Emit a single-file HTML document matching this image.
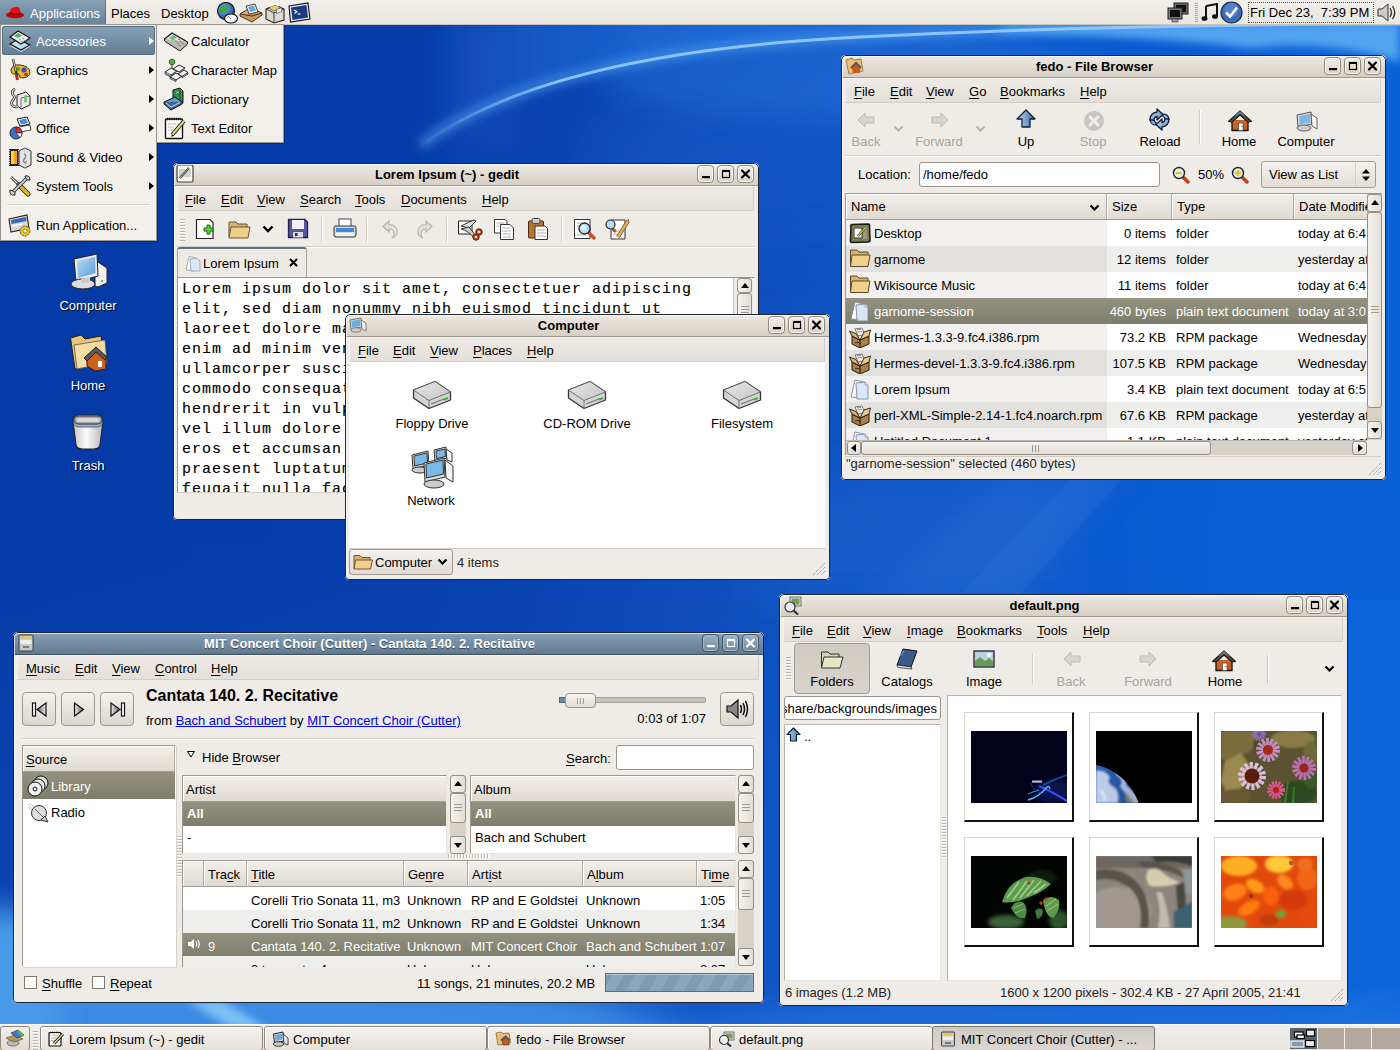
<!DOCTYPE html>
<html><head><meta charset="utf-8">
<style>
*{box-sizing:border-box}
html,body{margin:0;padding:0}
body{width:1400px;height:1050px;overflow:hidden;position:relative;font-family:"Liberation Sans",sans-serif;font-size:13px;color:#000;
background:#0b3ea8}
.a{position:absolute}
#bg{position:absolute;left:0;top:0;width:1400px;height:1050px;
background:
 radial-gradient(ellipse 700px 260px at 1250px 80px, rgba(120,190,255,.35), rgba(120,190,255,0) 70%),
 linear-gradient(160deg, rgba(0,0,0,0) 0%, rgba(0,0,0,0) 100%),
 linear-gradient(100deg,#0a38a2 0%,#0c40ac 30%,#1150bf 55%,#0f5cd0 80%,#0e62d8 100%)}
.win{position:absolute;background:#efebe7;border-radius:5px 5px 4px 4px;overflow:hidden}
.win::after{content:"";position:absolute;left:0;top:0;right:0;bottom:0;border:1px solid #1e2430;border-radius:5px 5px 4px 4px;pointer-events:none;box-shadow:inset 1px 1px 0 rgba(255,255,255,.7)}
.tb{position:absolute;left:0;right:0;top:0;height:23px;background:linear-gradient(#eeebe5,#d6cfc4);border-bottom:1px solid #9d968a;border-radius:4px 4px 0 0;box-shadow:inset 0 1px 0 #fff}
.tb.act{background:linear-gradient(#8ba3b8,#60798f);border-bottom:1px solid #3d4e5c}
.tt{position:absolute;left:0;right:0;top:1px;text-align:center;font-weight:bold;line-height:22px;white-space:nowrap}
.act .tt{color:#fff;text-shadow:0 1px 0 #3a4a58}
.btns{position:absolute;right:4px;top:2px;height:18px}
.btn{position:absolute;top:0;width:17px;height:18px;border:1px solid #8d877c;border-radius:4px;background:linear-gradient(#f2efea,#d8d2c8);box-shadow:inset 0 0 0 1px #fbf9f6}
.act .btn{border-color:#3f5263;background:linear-gradient(#9db2c4,#6f889d);box-shadow:inset 0 0 0 1px #a8bccc}
.mb{position:absolute;height:25px;background:linear-gradient(#eeeae5,#e4dfd8);border:1px solid #d4cfc6;border-top-color:#f6f4f1;border-left-color:#f6f4f1}
.mi{position:absolute;top:5px;white-space:nowrap;line-height:15px}
u{text-decoration:underline;text-decoration-thickness:1px;text-underline-offset:2px}
.grip{position:absolute;width:5px;height:22px;background:repeating-linear-gradient(#b8b2a8 0 1px,#fff 1px 2px,transparent 2px 3px)}
.sbb{position:absolute;width:16px;border:1px solid #948e84;border-radius:3px;background:linear-gradient(90deg,#f6f4f0,#e2ddd5)}
.aru{position:absolute;left:3px;top:6px;width:0;height:0;border-left:4px solid transparent;border-right:4px solid transparent;border-bottom:5px solid #000}
.ard{position:absolute;left:3px;top:6px;width:0;height:0;border-left:4px solid transparent;border-right:4px solid transparent;border-top:5px solid #000}
.grip3{position:absolute;left:3px;top:50%;margin-top:-4px;width:8px;height:7px;background:repeating-linear-gradient(#a09a90 0 1px,transparent 1px 3px)}
.hdr{background:linear-gradient(#f2efea,#e0dad1);border-right:1px solid #b0aa9f;border-bottom:1px solid #a39d92;box-shadow:inset 1px 1px 0 #fff}
.sbb2{position:absolute;height:14px;border:1px solid #948e84;border-radius:3px;background:linear-gradient(#f6f4f0,#e2ddd5)}
.arl{position:absolute;left:3px;top:2px;width:0;height:0;border-top:4px solid transparent;border-bottom:4px solid transparent;border-right:5px solid #000}
.arr2{position:absolute;left:5px;top:2px;width:0;height:0;border-top:4px solid transparent;border-bottom:4px solid transparent;border-left:5px solid #000}
.grip3v{position:absolute;left:50%;top:3px;margin-left:-4px;width:7px;height:7px;background:repeating-linear-gradient(90deg,#a09a90 0 1px,transparent 1px 3px)}
.lk{color:#0000ee;text-decoration:underline}
.dl{color:#fff;text-shadow:1px 1px 1px #000}
.nw{white-space:nowrap}
.tx{position:absolute;white-space:nowrap;line-height:15px}
.menu{position:absolute;background:#f3f0ec;border:1px solid #9b968d;box-shadow:1px 1px 0 rgba(0,0,0,.25)}
.arr{position:absolute;width:0;height:0;border-left:5px solid #000;border-top:4px solid transparent;border-bottom:4px solid transparent}
</style></head><body>
<svg id="bgsvg" class="a" style="left:0;top:0" width="1400" height="1050" viewBox="0 0 1400 1050">
<defs>
 <linearGradient id="bgl" x1="0" y1="0" x2="1" y2="0"><stop offset="0" stop-color="#053aa6"/><stop offset=".3" stop-color="#073daa"/><stop offset=".48" stop-color="#0c4ab8"/><stop offset=".62" stop-color="#0e54c4"/><stop offset=".8" stop-color="#0a5ad0"/><stop offset="1" stop-color="#0a62d8"/></linearGradient>
 <filter id="b07" x="-50%" y="-50%" width="200%" height="200%"><feGaussianBlur stdDeviation=".7"/></filter>
 <filter id="b4" x="-50%" y="-50%" width="200%" height="200%"><feGaussianBlur stdDeviation="4"/></filter>
 <filter id="b12" x="-50%" y="-50%" width="200%" height="200%"><feGaussianBlur stdDeviation="14"/></filter>
 <filter id="b30" x="-50%" y="-50%" width="200%" height="200%"><feGaussianBlur stdDeviation="30"/></filter>
</defs>
<rect width="1400" height="1050" fill="url(#bgl)"/>
<defs><linearGradient id="vgl" x1="0" y1="0" x2="0" y2="1"><stop offset="0" stop-color="#1a60d0" stop-opacity="0"/><stop offset="1" stop-color="#1a60d0" stop-opacity=".35"/></linearGradient></defs><rect x="0" y="480" width="1400" height="570" fill="url(#vgl)"/>
<!-- lower left lighter -->
<ellipse cx="180" cy="1040" rx="480" ry="110" fill="#3a8ae4" filter="url(#b30)"/><ellipse cx="0" cy="1000" rx="60" ry="90" fill="#4a9ae8" filter="url(#b12)"/>
<!-- top center glow above streak -->
<defs><linearGradient id="agl" x1="0" y1="0" x2="1" y2="0"><stop offset="0" stop-color="#2270dc" stop-opacity="0"/><stop offset=".12" stop-color="#2270dc" stop-opacity=".45"/><stop offset=".3" stop-color="#2270dc" stop-opacity=".75"/><stop offset="1" stop-color="#2a78e0" stop-opacity=".8"/></linearGradient></defs><path d="M421 145 C480 100 600 50 860 37 C1000 30 1200 24 1400 24 V0 H421Z" fill="url(#agl)" filter="url(#b4)"/>
<path d="M1000 25 H1400 V62 Q1330 40 1250 48 Q1150 36 1000 33Z" fill="#6cbcf8" opacity=".75" filter="url(#b4)"/>
<path d="M560 160 Q700 60 860 50 Q1000 45 1060 60 L1060 250 Q900 200 700 240Z" fill="#1258c8" opacity=".5" filter="url(#b30)"/>
<rect x="455" y="25" width="70" height="130" fill="#1a5ac8" opacity=".3" filter="url(#b12)"/>
<!-- thin streak -->
<ellipse cx="860" cy="75" rx="260" ry="45" fill="#2a78e0" opacity=".4" filter="url(#b12)"/>
<path d="M421 145 C480 100 600 50 860 37 C1000 30 1200 24 1400 24" stroke="#5aaaf8" stroke-width="13" fill="none" opacity=".42" filter="url(#b4)"/>
<defs><linearGradient id="stg" gradientUnits="userSpaceOnUse" x1="415" y1="0" x2="560" y2="0"><stop offset="0" stop-color="#9ad0ff" stop-opacity="0"/><stop offset="1" stop-color="#9ad0ff" stop-opacity="1"/></linearGradient></defs><path d="M415 150 C480 100 600 50 860 37 C1000 30 1200 24 1400 24" stroke="url(#stg)" stroke-width="3" fill="none" opacity=".85" filter="url(#b07)"/>
<!-- diagonal band below file browser -->
<rect x="760" y="470" width="300" height="130" fill="#1a5ecc" opacity=".6" filter="url(#b30)"/><path d="M1010 605 L1130 470 L1000 470 L860 605Z" fill="#2a70d8" opacity=".35" filter="url(#b12)"/><path d="M1010 605 L1130 470 L1080 470 L950 605Z" fill="#2a70d8" opacity=".3" filter="url(#b07)"/>
<!-- bottom strip streaks -->
<path d="M185 1000 L235 1030 L270 1030 L222 1000Z" fill="#9ad8ff" opacity=".7" filter="url(#b4)"/>
<path d="M380 1000 Q480 1010 560 1030 L700 1030 Q600 1010 500 1000Z" fill="#3a88e0" opacity=".5" filter="url(#b4)"/>
<path d="M1300 1030 Q1340 1010 1400 990 V1030Z" fill="#2a78e0" opacity=".5" filter="url(#b12)"/>
<path d="M1347 1010 Q1370 1000 1400 990" stroke="#4a98f0" stroke-width="3" fill="none" opacity=".6" filter="url(#b4)"/>
<rect x="1347" y="600" width="60" height="420" fill="#0c68dc" opacity=".6"/>
<ellipse cx="1050" cy="1030" rx="420" ry="35" fill="#2a7ee6" opacity=".45" filter="url(#b12)"/>
</svg>


<!-- DESKTOP ICONS -->
<svg class="a" style="left:68px;top:253px" width="41" height="37" viewBox="0 0 41 37"><defs><linearGradient id="scr" x1="0" y1="0" x2="1" y2="1"><stop offset="0" stop-color="#b8dcf8"/><stop offset="1" stop-color="#5a9ad8"/></linearGradient></defs><path d="M27 7 L39 15 V30 L30 34 L27 33Z" fill="#f0f0f0" stroke="#222" stroke-width="1"/><path d="M6 6 L29 1 L30 23 L8 29Z" fill="#e8e8e8" stroke="#222" stroke-width="1"/><path d="M9 8 L27 4 L27.5 20 L10 25Z" fill="url(#scr)"/><ellipse cx="15" cy="31" rx="12" ry="5" fill="#ddd" stroke="#222" stroke-width="1"/><path d="M13 26 L22 24 L22 29 L13 30Z" fill="#ccc"/><circle cx="34" cy="28" r="1" fill="#3a3"/></svg>
<div class="tx dl" style="left:38px;top:298px;width:100px;text-align:center">Computer</div>
<svg class="a" style="left:69px;top:333px" width="40" height="39" viewBox="0 0 40 39"><path d="M1.5 5 L12 2 L16 6 L32 3 L36 30 L6 36Z" fill="#e8c47a" stroke="#222" stroke-width="1"/><path d="M5 12 L36 7 L38 30 L8 36Z" fill="#f6dca0" stroke="#555" stroke-width=".8"/><path d="M18 26 L28 18 L37 26 V36 L26 38 L18 33Z" fill="#d06020" stroke="#222" stroke-width="1"/><path d="M15 25 L27 14 L38 24 L36 27 L27 19 L18 28Z" fill="#5a5a5a" stroke="#222" stroke-width="1"/><rect x="29" y="28" width="4" height="6" fill="#fff"/></svg>
<div class="tx dl" style="left:38px;top:378px;width:100px;text-align:center">Home</div>
<svg class="a" style="left:71px;top:412px" width="34" height="39" viewBox="0 0 34 39"><defs><linearGradient id="trg" x1="0" x2="1"><stop offset="0" stop-color="#c8c8c8"/><stop offset=".45" stop-color="#fafafa"/><stop offset="1" stop-color="#b8b8b8"/></linearGradient></defs><path d="M2 9 Q2 3 8 3 H26 Q32 3 32 9 L29 33 Q28 37 23 37 H11 Q6 37 5 33Z" fill="url(#trg)" stroke="#222" stroke-width="1.1"/><path d="M2.5 10 Q3 15 8 15 H26 Q31 15 31.5 10" fill="#9ab0c8" stroke="#5a6a80" stroke-width="1"/><path d="M3 8 Q3 4 8 4 H26 Q31 4 31 8 Q31 12 26 12 H8 Q3 12 3 8Z" fill="#a8a8a8" stroke="#333" stroke-width="1"/><path d="M5.5 8 Q5.5 6 8.5 6 H25.5 Q28.5 6 28.5 8 Q28.5 10 25.5 10 H8.5 Q5.5 10 5.5 8Z" fill="#d8d8d8"/></svg>
<div class="tx dl" style="left:38px;top:458px;width:100px;text-align:center">Trash</div>

<!-- TOP PANEL -->
<div class="a" id="toppanel" style="left:0;top:0;width:1400px;height:25px;background:linear-gradient(#f2efeb,#e9e5df);border-bottom:1px solid #c9c3b9">
 <div class="a" style="left:0;top:0;width:106px;height:24px;background:linear-gradient(#86a0b6,#6a8499);border-right:1px solid #5b7185"></div>
 <svg class="a" style="left:5px;top:5px" width="20" height="14" viewBox="0 0 20 14"><ellipse cx="10" cy="10" rx="9" ry="3.2" fill="#c40000"/><path d="M4.5 9 Q5 2 9 2.5 Q12 1 14.5 3 Q15.5 6 15.5 9 Q10 11 4.5 9Z" fill="#e01010"/><path d="M5 8 Q10 10.5 15.5 8.2" stroke="#600" stroke-width="1.2" fill="none"/></svg>
 <div class="tx" style="left:30px;top:6px;color:#fff">Applications</div>
 <div class="tx" style="left:111px;top:6px">Places</div>
 <div class="tx" style="left:161px;top:6px">Desktop</div>
 <svg class="a" style="left:216px;top:2px" width="23" height="22" viewBox="0 0 23 22"><defs><radialGradient id="glb" cx=".35" cy=".35" r=".7"><stop offset="0" stop-color="#6ab8f0"/><stop offset="1" stop-color="#1a4a98"/></radialGradient></defs><circle cx="10" cy="9" r="8.5" fill="url(#glb)" stroke="#111" stroke-width="1.1"/><path d="M4 5 Q8 2 12 4 Q14 7 11 9 Q7 9 6 12 Q3 10 4 5Z" fill="#4aa048"/><path d="M13 11 Q16 10 17 13 Q14 15 13 11Z" fill="#4aa048"/><ellipse cx="15" cy="16.5" rx="6.5" ry="4.5" fill="#f4f4f4" stroke="#111" stroke-width="1.1"/><path d="M12 14 L15 17" stroke="#666" stroke-width=".8"/></svg>
 <svg class="a" style="left:239px;top:3px" width="24" height="20" viewBox="0 0 24 20"><path d="M1 11 L11 5 L23 10 L13 17Z" fill="#e0b878" stroke="#3a2a10" stroke-width="1"/><path d="M1 11 L13 13 L23 10 M1 11 V13 L13 19 L23 12 V10" fill="#c89858" stroke="#3a2a10" stroke-width=".9"/><path d="M7 3 L16 1 L19 9 L10 11Z" fill="#e8f0f8" stroke="#333" stroke-width=".9"/><path d="M9 4 L15 2.5 L17 7.5 L11 9Z" fill="#6aa8e0"/></svg>
 <svg class="a" style="left:264px;top:2px" width="22" height="22" viewBox="0 0 22 22"><path d="M2 7 L12 3 L20 7 L20 18 L10 21 L2 17Z" fill="#dcd8d0" stroke="#222" stroke-width="1.1"/><path d="M2 7 L10 11 L20 7 M10 11 V21" stroke="#333" fill="none" stroke-width=".9"/><path d="M4 6 L11 3 L17 6 L10 9Z" fill="#f0d060" stroke="#444" stroke-width=".7"/><path d="M6 4 L11 2 L15 4" stroke="#fff" stroke-width="1.5" fill="none"/><rect x="12.5" y="12" width="5" height="4" fill="#fff" stroke="#555" stroke-width=".7" transform="skewY(-20)"/></svg>
 <svg class="a" style="left:288px;top:2px" width="23" height="21" viewBox="0 0 23 21"><path d="M1 4 L20 1 L22 17 L2.5 20Z" fill="#e4e8ee" stroke="#111" stroke-width="1.1"/><path d="M3 5.5 L18.5 3 L20 15.5 L4.5 18Z" fill="#1c3a80"/><path d="M6 8 L9 9.5 L6.5 11.5" stroke="#fff" fill="none" stroke-width="1.1"/><path d="M9.5 12 H12.5" stroke="#fff" stroke-width="1.1"/></svg>
 <!-- right side -->
 <svg class="a" style="left:1166px;top:2px" width="24" height="21" viewBox="0 0 24 21"><rect x="8" y="1" width="14" height="11" fill="#666" stroke="#222"/><rect x="10" y="3" width="10" height="7" fill="#111"/><rect x="2" y="6" width="14" height="11" fill="#777" stroke="#222"/><rect x="4" y="8" width="10" height="7" fill="#111"/><rect x="6" y="17" width="6" height="3" fill="#999" stroke="#333" stroke-width=".6"/></svg>
 <div class="a" style="left:1195px;top:3px;width:3px;height:19px;background:repeating-linear-gradient(#aaa 0 1px,transparent 1px 2px)"></div>
 <svg class="a" style="left:1201px;top:3px" width="18" height="19" viewBox="0 0 18 19"><path d="M5 3 L16 1 L16 13" stroke="#111" stroke-width="2" fill="none"/><path d="M5 3 V15" stroke="#111" stroke-width="2"/><ellipse cx="3.5" cy="15.5" rx="3" ry="2.3" fill="#111"/><ellipse cx="14" cy="13.5" rx="3" ry="2.3" fill="#111"/></svg>
 <svg class="a" style="left:1220px;top:1px" width="23" height="23" viewBox="0 0 23 23"><circle cx="11.5" cy="11.5" r="10.5" fill="#3a6bb8" stroke="#1b2e55" stroke-width="1.2"/><circle cx="11.5" cy="9" r="7" fill="#6b98d8" opacity=".5"/><path d="M6 11.5 L10 15.5 L17 6.5" stroke="#fff" stroke-width="2.6" fill="none"/></svg>
 <div class="a" style="left:1248px;top:2px;width:126px;height:21px;border:1px dotted #555"></div>
 <div class="tx" style="left:1250px;top:5px">Fri Dec 23,&nbsp; 7:39 PM</div>
 <svg class="a" style="left:1376px;top:3px" width="22" height="19" viewBox="0 0 22 19"><path d="M2 6 H6 L12 1 V18 L6 13 H2Z" fill="#ccc" stroke="#333"/><path d="M14 5 Q17 9.5 14 14" stroke="#333" fill="none" stroke-width="1.3"/><path d="M16.5 3 Q21 9.5 16.5 16" stroke="#333" fill="none" stroke-width="1.3"/></svg>
</div>

<!-- BOTTOM PANEL -->
<div class="a" id="botpanel" style="left:0;top:1024px;width:1400px;height:26px;background:linear-gradient(#f2efeb,#e9e5df);border-top:1px solid #f8fbff">
 <div class="a" style="left:0;top:1px;width:30px;height:25px;border:1px solid #8e887e;border-radius:3px;background:linear-gradient(#f2efea,#e0dbd3)"></div>
 <svg class="a" style="left:5px;top:4px" width="20" height="18" viewBox="0 0 20 18"><ellipse cx="8" cy="14" rx="6" ry="3" fill="#bbb" stroke="#555" stroke-width=".7"/><path d="M1 9 L10 6 L18 10 L9 13Z" fill="#b89858" stroke="#555" stroke-width=".7"/><path d="M6 4 L13 1 L19 6 L12 9Z" fill="#3a7ad8" stroke="#333" stroke-width=".7"/><path d="M13 1 L19 6 L18 8 L12 3Z" fill="#5ab858"/></svg>
 <div class="a" style="left:33px;top:6px;width:5px;height:19px;background:repeating-linear-gradient(#b8b2a8 0 1px,#fff 1px 2px,transparent 2px 3px)"></div>
 <div class="a" style="left:40px;top:1px;width:223px;height:25px;border:1px solid #8e887e;border-radius:3px;background:linear-gradient(#f4f1ed,#e6e1da);box-shadow:inset 1px 1px 0 #fff"></div>
 <div class="a" style="left:48px;top:6px"><svg width="17" height="16" viewBox="0 0 17 16"><rect x="1" y="1.5" width="12" height="13.5" rx="1" fill="#f4f4f2" stroke="#111" stroke-width="1.2"/><path d="M2 1.5 H12" stroke="#111" stroke-dasharray="1 1" stroke-width="1.5"/><path d="M5 4.5 H10 M3 7 H9 M3 9.5 H7" stroke="#aaa" stroke-width=".8"/><path d="M6 12.5 L15 3" stroke="#111" stroke-width="3"/><path d="M6 12.5 L15 3" stroke="#e8d090" stroke-width="1.4"/></svg></div>
 <div class="tx" style="left:69px;top:7px">Lorem Ipsum (~) - gedit</div>
 <div class="a" style="left:264px;top:1px;width:223px;height:25px;border:1px solid #8e887e;border-radius:3px;background:linear-gradient(#f4f1ed,#e6e1da);box-shadow:inset 1px 1px 0 #fff"></div>
 <div class="a" style="left:272px;top:6px"><svg width="17" height="16" viewBox="0 0 17 16"><path d="M1.5 3 L11 1 L12 10 L2.5 12Z" fill="#ddd" stroke="#222" stroke-width="1"/><path d="M3 4 L10 2.5 L10.5 8.5 L3.5 10Z" fill="#6aaee0"/><path d="M11 3 L16 7 V14 L12 12Z" fill="#eee" stroke="#333" stroke-width=".9"/><ellipse cx="6.5" cy="13" rx="5" ry="2.2" fill="#ccc" stroke="#222" stroke-width=".9"/></svg></div>
 <div class="tx" style="left:293px;top:7px">Computer</div>
 <div class="a" style="left:487px;top:1px;width:223px;height:25px;border:1px solid #8e887e;border-radius:3px;background:linear-gradient(#f4f1ed,#e6e1da);box-shadow:inset 1px 1px 0 #fff"></div>
 <div class="a" style="left:495px;top:6px"><svg width="17" height="16" viewBox="0 0 17 16"><path d="M1 2 L6 1 L8 2.5 L14 2 L15.5 12 L3 14Z" fill="#e8c078" stroke="#8a6a30" stroke-width=".8"/><path d="M7 9 L10.5 6 L14 9 V14 H8Z" fill="#c85a20" stroke="#333" stroke-width=".6"/><path d="M6 9.5 L10.5 5.5 L15 9.5" stroke="#555" stroke-width="1.8" fill="none"/></svg></div>
 <div class="tx" style="left:516px;top:7px">fedo - File Browser</div>
 <div class="a" style="left:710px;top:1px;width:223px;height:25px;border:1px solid #8e887e;border-radius:3px;background:linear-gradient(#f4f1ed,#e6e1da);box-shadow:inset 1px 1px 0 #fff"></div>
 <div class="a" style="left:718px;top:6px"><svg width="17" height="16" viewBox="0 0 17 16"><rect x="6" y="1" width="10" height="8" fill="#ddd" stroke="#555" stroke-width=".8"/><rect x="7.5" y="2.5" width="7" height="5" fill="#7a9a60"/><circle cx="6" cy="9" r="4.5" fill="#e8eef2" stroke="#333" stroke-width="1.2"/><path d="M9 12 L13 15.5" stroke="#333" stroke-width="2"/></svg></div>
 <div class="tx" style="left:739px;top:7px">default.png</div>
 <div class="a" style="left:932px;top:1px;width:223px;height:25px;border:1px solid #7d776d;border-radius:3px;background:linear-gradient(#cfcac3,#dcd7d0)"></div>
 <div class="a" style="left:940px;top:6px"><svg width="17" height="16" viewBox="0 0 17 16"><rect x="1.5" y="1" width="13" height="14" rx="1" fill="#c8c8c8" stroke="#333" stroke-width=".9"/><rect x="3.5" y="2.3" width="9" height="1.8" fill="#e8c040"/><rect x="3" y="5.5" width="10" height="3.5" fill="#eee"/><path d="M5 12 H11" stroke="#333" stroke-width="1.1"/></svg></div>
 <div class="tx" style="left:961px;top:7px">MIT Concert Choir (Cutter) - ...</div>
 <div class="a" style="left:1290px;top:3px;width:110px;height:21px;background:#b4a89e"></div>
 <div class="a" style="left:1290px;top:3px;width:27px;height:21px;background:#57656f"></div>
 <div class="a" style="left:1317px;top:3px;width:1px;height:21px;background:#f4eee8"></div>
 <div class="a" style="left:1344px;top:3px;width:1px;height:21px;background:#f4eee8"></div>
 <div class="a" style="left:1371px;top:3px;width:1px;height:21px;background:#f4eee8"></div>
 <svg class="a" style="left:1290px;top:3px" width="27" height="21" viewBox="0 0 27 21"><rect x="4.5" y="4" width="8.5" height="5" fill="#fff" stroke="#000" stroke-width="1.2"/><rect x="7" y="7" width="7.5" height="3.5" fill="#fff" stroke="#000" stroke-width="1.2"/><rect x="16.5" y="2" width="8" height="6" fill="#eee" stroke="#000" stroke-width="1.2"/><rect x="1" y="13" width="13" height="6" fill="#8898a8" stroke="#fff" stroke-width="1.2"/><rect x="15.5" y="12.5" width="9" height="6" fill="#eee" stroke="#000" stroke-width="1.2"/></svg>
</div>

<!-- FILE BROWSER -->
<div class="win" id="fb" style="left:841px;top:55px;width:545px;height:425px">
 <div class="tb"><div class="tt" style="left:24px;right:62px">fedo - File Browser</div>
  <svg class="a" style="left:4px;top:2px" width="19" height="19" viewBox="0 0 19 19"><path d="M1 3 L7 1 L9 3 L16 2 L18 14 L4 17Z" fill="#e8c078" stroke="#8a6a30" stroke-width=".8"/><path d="M7 11 L11 7 L15 11 V16 H8Z" fill="#c85a20"/><path d="M6 11 L11 6 L16 11" stroke="#555" stroke-width="2" fill="none"/></svg>
  <div class="btns" style="width:58px"><div class="btn" style="left:0"><svg width="15" height="16" class="a" style="left:0;top:0"><rect x="4" y="10" width="8" height="2.2" fill="#000"/></svg></div><div class="btn" style="left:20px"><svg width="15" height="16" class="a" style="left:0;top:0"><rect x="4.5" y="4.5" width="7" height="7" fill="none" stroke="#000" stroke-width="1.2"/><rect x="4" y="4" width="8" height="2" fill="#000"/></svg></div><div class="btn" style="left:40px"><svg width="15" height="16" class="a" style="left:0;top:0"><path d="M4 4.5 L11 11.5 M11 4.5 L4 11.5" stroke="#000" stroke-width="2.2" stroke-linecap="round"/></svg></div></div>
 </div>
 <div class="mb" style="left:4px;top:23px;width:536px;height:25px">
  <div class="mi" style="left:8px"><u>F</u>ile</div>
  <div class="mi" style="left:44px"><u>E</u>dit</div>
  <div class="mi" style="left:80px"><u>V</u>iew</div>
  <div class="mi" style="left:123px"><u>G</u>o</div>
  <div class="mi" style="left:154px"><u>B</u>ookmarks</div>
  <div class="mi" style="left:234px"><u>H</u>elp</div>
 </div>
 <div class="a" style="left:4px;top:100px;width:536px;height:2px;border-top:1px solid #d2ccc3;border-bottom:1px solid #fff"></div>
 <svg class="a" style="left:16px;top:56px" width="18" height="18" viewBox="0 0 18 18"><path d="M1 9 L8 2 V6 H17 V12 H8 V16Z" fill="#d8d5d0" stroke="#bdb9b2" stroke-width="1"/></svg>
 <div class="tx" style="left:-15px;top:79px;width:80px;text-align:center;color:#a8a49c">Back</div>
 <svg class="a" style="left:52px;top:70px" width="11" height="7" viewBox="0 0 11 7"><path d="M1.5 1.5 L5.5 5.5 L9.5 1.5" stroke="#b5b1aa" stroke-width="2" fill="none"/></svg>
 <svg class="a" style="left:90px;top:56px" width="18" height="18" viewBox="0 0 18 18"><path d="M17 9 L10 2 V6 H1 V12 H10 V16Z" fill="#d8d5d0" stroke="#bdb9b2" stroke-width="1"/></svg>
 <div class="tx" style="left:58px;top:79px;width:80px;text-align:center;color:#a8a49c">Forward</div>
 <svg class="a" style="left:134px;top:70px" width="11" height="7" viewBox="0 0 11 7"><path d="M1.5 1.5 L5.5 5.5 L9.5 1.5" stroke="#b5b1aa" stroke-width="2" fill="none"/></svg>
 <svg class="a" style="left:175px;top:54px" width="20" height="19" viewBox="0 0 20 19"><defs><linearGradient id="upg" x1="0" x2="1"><stop offset="0" stop-color="#bcd8f4"/><stop offset="1" stop-color="#3a6aa8"/></linearGradient></defs><path d="M10 1 L19 10 H14 V18 H6 V10 H1Z" fill="url(#upg)" stroke="#0f1e38" stroke-width="1.3" stroke-linejoin="round"/></svg>
 <div class="tx" style="left:145px;top:79px;width:80px;text-align:center;color:#000">Up</div>
 <svg class="a" style="left:242px;top:55px" width="22" height="22" viewBox="0 0 22 22"><circle cx="11" cy="11" r="10" fill="#c8c5c0"/><path d="M7 7 L15 15 M15 7 L7 15" stroke="#f2f0ec" stroke-width="3" stroke-linecap="round"/></svg>
 <div class="tx" style="left:212px;top:79px;width:80px;text-align:center;color:#a8a49c">Stop</div>
 <svg class="a" style="left:306px;top:52px" width="25" height="25" viewBox="0 0 25 25"><defs><linearGradient id="rlg" x1="0" y1="0" x2="1" y2="1"><stop offset="0" stop-color="#d4e8f8"/><stop offset="1" stop-color="#4a7ab8"/></linearGradient></defs><path d="M3 13 Q3 6 10 5 L10 2 L16 7.5 L10 13 L10 9.5 Q7 10 7 13.5Z" fill="url(#rlg)" stroke="#10203a" stroke-width="1.3" stroke-linejoin="round"/><path d="M22 12 Q22 19 15 20 L15 23 L9 17.5 L15 12 L15 15.5 Q18 15 18 11.5Z" fill="url(#rlg)" stroke="#10203a" stroke-width="1.3" stroke-linejoin="round"/><path d="M16 7 Q21 7 22 12 L18 11.5 Q17.5 10 16 9.5Z" fill="#8ab4e0" stroke="#10203a" stroke-width="1.2"/><path d="M9 18 Q4 18 3 13 L7 13.5 Q7.5 15 9 15.5Z" fill="#8ab4e0" stroke="#10203a" stroke-width="1.2"/></svg>
 <div class="tx" style="left:279px;top:79px;width:80px;text-align:center;color:#000">Reload</div>
 <div class="a" style="left:358px;top:55px;width:2px;height:34px;border-left:1px solid #d2ccc3;border-right:1px solid #fff"></div>
 <svg class="a" style="left:386px;top:54px" width="26" height="23" viewBox="0 0 26 23"><path d="M5 11 V21.5 H21 V11" fill="#c8601c" stroke="#1a1008" stroke-width="1.3"/><path d="M5 13 H21" stroke="#e88040" stroke-width="1" opacity=".6"/><path d="M1.5 12.5 L13 2 L24.5 12.5 L21 13 L13 6 L5 13Z" fill="#555" stroke="#1a1a1a" stroke-width="1.2" stroke-linejoin="round"/><path d="M6 8 L13 2 L20 8 L13 4.5Z" fill="#7a7a7a"/><rect x="11.5" y="14" width="4.5" height="7.5" fill="#fff" stroke="#333" stroke-width=".6"/><circle cx="14.8" cy="17.5" r=".6" fill="#333"/></svg>
 <div class="tx" style="left:358px;top:79px;width:80px;text-align:center;color:#000">Home</div>
 <svg class="a" style="left:454px;top:56px" width="24" height="21" viewBox="0 0 24 21"><path d="M2 4 L16 1 L17 13 L3 16Z" fill="#ddd" stroke="#444" stroke-width=".9"/><path d="M4 5 L15 3 L15.5 11.5 L4.5 13.5Z" fill="#7ab8e8"/><path d="M16 3 L22 7 V18 L17 15Z" fill="#f4f4f4" stroke="#555" stroke-width=".9"/><ellipse cx="9" cy="17" rx="7" ry="3" fill="#ccc" stroke="#555" stroke-width=".9"/></svg>
 <div class="tx" style="left:425px;top:79px;width:80px;text-align:center;color:#000">Computer</div>
 <div class="tx" style="left:17px;top:112px">Location:</div>
 <div class="a" style="left:78px;top:107px;width:241px;height:25px;background:#fff;border:1px solid #9b958b;border-radius:3px"></div>
 <div class="tx" style="left:82px;top:112px">/home/fedo</div>
 <div class="a" style="left:331px;top:111px"><svg width="18" height="18" viewBox="0 0 18 18"><path d="M10 10 L16 16" stroke="#c8401a" stroke-width="3.5" stroke-linecap="round"/><circle cx="7" cy="7" r="5.5" fill="#e6ecf0" stroke="#222" stroke-width="1.4"/><rect x="4" y="6" width="6" height="2.2" fill="#e8c020"/></svg></div>
 <div class="tx" style="left:357px;top:112px">50%</div>
 <div class="a" style="left:390px;top:111px"><svg width="18" height="18" viewBox="0 0 18 18"><path d="M10 10 L16 16" stroke="#c8401a" stroke-width="3.5" stroke-linecap="round"/><circle cx="7" cy="7" r="5.5" fill="#e6ecf0" stroke="#222" stroke-width="1.4"/><rect x="4" y="6" width="6" height="2.2" fill="#e8c020"/><rect x="5.9" y="4.1" width="2.2" height="6" fill="#e8c020"/></svg></div>
 <div class="a" style="left:420px;top:106px;width:115px;height:27px;border:1px solid #a39d93;border-radius:3px;background:linear-gradient(#f4f2ee,#e2ddd5)"></div>
 <div class="tx" style="left:428px;top:112px">View as List</div>
 <div class="a" style="left:514px;top:108px;width:1px;height:23px;background:#d4cfc6"></div>
 <svg class="a" style="left:520px;top:113px" width="10" height="14" viewBox="0 0 10 14"><path d="M1 5.5 L5 1 L9 5.5Z M1 8.5 L5 13 L9 8.5Z" fill="#000"/></svg>
 <div class="a" style="left:4px;top:138px;width:537px;height:262px;border:1px solid #9d978c;border-right:none;border-bottom:none;background:#fff;overflow:hidden">
  <div class="a hdr" style="left:0px;top:0;width:261px;height:26px"><span class="tx" style="left:5px;top:5px">Name</span></div>
  <div class="a hdr" style="left:261px;top:0;width:65px;height:26px"><span class="tx" style="left:5px;top:5px">Size</span></div>
  <div class="a hdr" style="left:326px;top:0;width:122px;height:26px"><span class="tx" style="left:5px;top:5px">Type</span></div>
  <div class="a hdr" style="left:448px;top:0;width:80px;height:26px"><span class="tx" style="left:5px;top:5px">Date Modified</span></div>
  <svg class="a" style="left:243px;top:10px" width="11" height="8" viewBox="0 0 11 8"><path d="M1.5 1.5 L5.5 5.5 L9.5 1.5" stroke="#000" stroke-width="2.2" fill="none"/></svg>
  <div class="a" style="left:0;top:26px;width:261px;height:26px;background:#f1f0ee"></div>
  <div class="a" style="left:261px;top:26px;width:260px;height:26px;background:#fff"></div>
  <div class="a" style="left:3px;top:28px"><svg width="22" height="22" viewBox="0 0 22 22"><path d="M2 4 Q1 3 3 2.5 L19 2 Q21 2 20.5 4 L21 18 Q21 20 19 20 L3 20.5 Q1 20.5 1.5 18Z" fill="#7c7c5c" stroke="#1a1a10" stroke-width="1.6"/><path d="M4 5 H18 V17 H4Z" fill="#b8b890" opacity=".5"/><rect x="5" y="6" width="8" height="10" fill="#f8f8f8" stroke="#222" stroke-width=".9"/><path d="M9 14 L16 6" stroke="#222" stroke-width="2.4"/><path d="M9 14 L16 6" stroke="#c8d840" stroke-width="1.2"/></svg></div>
  <div class="tx" style="left:28px;top:32px;color:#000">Desktop</div>
  <div class="tx" style="left:261px;top:32px;width:59px;text-align:right;color:#000">0 items</div>
  <div class="tx" style="left:330px;top:32px;color:#000">folder</div>
  <div class="a" style="left:448px;top:32px;width:73px;height:20px;overflow:hidden"><span class="tx" style="left:4px;top:0;color:#000">today at 6:4</span></div>
  <div class="a" style="left:0;top:52px;width:261px;height:26px;background:#e2e1de"></div>
  <div class="a" style="left:261px;top:52px;width:260px;height:26px;background:#eeeeec"></div>
  <div class="a" style="left:3px;top:54px"><svg width="22" height="20" viewBox="0 0 22 20"><path d="M1.5 2 H8 L10 4 H19 V17 H1.5Z" fill="#d8b070" stroke="#5b4a2a" stroke-width="1"/><path d="M3 7 H21 L19 18.5 H1.5Z" fill="#f2d08c" stroke="#5b4a2a" stroke-width="1"/></svg></div>
  <div class="tx" style="left:28px;top:58px;color:#000">garnome</div>
  <div class="tx" style="left:261px;top:58px;width:59px;text-align:right;color:#000">12 items</div>
  <div class="tx" style="left:330px;top:58px;color:#000">folder</div>
  <div class="a" style="left:448px;top:58px;width:73px;height:20px;overflow:hidden"><span class="tx" style="left:4px;top:0;color:#000">yesterday at</span></div>
  <div class="a" style="left:0;top:78px;width:261px;height:26px;background:#f1f0ee"></div>
  <div class="a" style="left:261px;top:78px;width:260px;height:26px;background:#fff"></div>
  <div class="a" style="left:3px;top:80px"><svg width="22" height="20" viewBox="0 0 22 20"><path d="M1.5 2 H8 L10 4 H19 V17 H1.5Z" fill="#d8b070" stroke="#5b4a2a" stroke-width="1"/><path d="M3 7 H21 L19 18.5 H1.5Z" fill="#f2d08c" stroke="#5b4a2a" stroke-width="1"/></svg></div>
  <div class="tx" style="left:28px;top:84px;color:#000">Wikisource Music</div>
  <div class="tx" style="left:261px;top:84px;width:59px;text-align:right;color:#000">11 items</div>
  <div class="tx" style="left:330px;top:84px;color:#000">folder</div>
  <div class="a" style="left:448px;top:84px;width:73px;height:20px;overflow:hidden"><span class="tx" style="left:4px;top:0;color:#000">today at 6:4</span></div>
  <div class="a" style="left:0;top:104px;width:521px;height:26px;background:linear-gradient(#94927f,#7e7c6b)"></div>
  <div class="a" style="left:3px;top:106px"><svg width="22" height="22" viewBox="0 0 22 22"><path d="M2 19 L6 2 L15 4 L12 20Z" fill="#fafafa" stroke="#8a8a8a" stroke-width=".9"/><path d="M7 5 L16 4 L19 7 L19 21 L8 21Z" fill="#d8e6f8" stroke="#7a8aa0" stroke-width=".9"/><path d="M16 4 V7 H19" fill="#eef4fc" stroke="#7a8aa0" stroke-width=".7"/></svg></div>
  <div class="tx" style="left:28px;top:110px;color:#fff">garnome-session</div>
  <div class="tx" style="left:261px;top:110px;width:59px;text-align:right;color:#fff">460 bytes</div>
  <div class="tx" style="left:330px;top:110px;color:#fff">plain text document</div>
  <div class="a" style="left:448px;top:110px;width:73px;height:20px;overflow:hidden"><span class="tx" style="left:4px;top:0;color:#fff">today at 3:0</span></div>
  <div class="a" style="left:0;top:130px;width:261px;height:26px;background:#f1f0ee"></div>
  <div class="a" style="left:261px;top:130px;width:260px;height:26px;background:#fff"></div>
  <div class="a" style="left:3px;top:132px"><svg width="22" height="22" viewBox="0 0 22 22"><path d="M3 10 L11 14 L20 10 V18 L11 22 L3 18Z" fill="#a8804a" stroke="#2a1a08" stroke-width="1"/><path d="M11 14 V22" stroke="#2a1a08"/><path d="M3 10 L11 14 L20 10" fill="none" stroke="#2a1a08"/><path d="M6 3 L13 2 L16 9 L9 10Z" fill="#f4f4f4" stroke="#555" stroke-width=".8"/><path d="M8 4 L12 3.5 M8.5 6 L13 5.5" stroke="#c44" stroke-width=".8"/><path d="M3 10 L0.5 5 L7 7.5 L11 14Z" fill="#d8b078" stroke="#2a1a08" stroke-width=".9"/><path d="M20 10 L21.5 4 L15 6 L11 14Z" fill="#e8c890" stroke="#2a1a08" stroke-width=".9"/><path d="M6 17 Q9 15 12 18" stroke="#2a1a08" fill="none" stroke-width=".8"/></svg></div>
  <div class="tx" style="left:28px;top:136px;color:#000">Hermes-1.3.3-9.fc4.i386.rpm</div>
  <div class="tx" style="left:261px;top:136px;width:59px;text-align:right;color:#000">73.2 KB</div>
  <div class="tx" style="left:330px;top:136px;color:#000">RPM package</div>
  <div class="a" style="left:448px;top:136px;width:73px;height:20px;overflow:hidden"><span class="tx" style="left:4px;top:0;color:#000">Wednesday</span></div>
  <div class="a" style="left:0;top:156px;width:261px;height:26px;background:#e2e1de"></div>
  <div class="a" style="left:261px;top:156px;width:260px;height:26px;background:#eeeeec"></div>
  <div class="a" style="left:3px;top:158px"><svg width="22" height="22" viewBox="0 0 22 22"><path d="M3 10 L11 14 L20 10 V18 L11 22 L3 18Z" fill="#a8804a" stroke="#2a1a08" stroke-width="1"/><path d="M11 14 V22" stroke="#2a1a08"/><path d="M3 10 L11 14 L20 10" fill="none" stroke="#2a1a08"/><path d="M6 3 L13 2 L16 9 L9 10Z" fill="#f4f4f4" stroke="#555" stroke-width=".8"/><path d="M8 4 L12 3.5 M8.5 6 L13 5.5" stroke="#c44" stroke-width=".8"/><path d="M3 10 L0.5 5 L7 7.5 L11 14Z" fill="#d8b078" stroke="#2a1a08" stroke-width=".9"/><path d="M20 10 L21.5 4 L15 6 L11 14Z" fill="#e8c890" stroke="#2a1a08" stroke-width=".9"/><path d="M6 17 Q9 15 12 18" stroke="#2a1a08" fill="none" stroke-width=".8"/></svg></div>
  <div class="tx" style="left:28px;top:162px;color:#000">Hermes-devel-1.3.3-9.fc4.i386.rpm</div>
  <div class="tx" style="left:261px;top:162px;width:59px;text-align:right;color:#000">107.5 KB</div>
  <div class="tx" style="left:330px;top:162px;color:#000">RPM package</div>
  <div class="a" style="left:448px;top:162px;width:73px;height:20px;overflow:hidden"><span class="tx" style="left:4px;top:0;color:#000">Wednesday</span></div>
  <div class="a" style="left:0;top:182px;width:261px;height:26px;background:#f1f0ee"></div>
  <div class="a" style="left:261px;top:182px;width:260px;height:26px;background:#fff"></div>
  <div class="a" style="left:3px;top:184px"><svg width="22" height="22" viewBox="0 0 22 22"><path d="M2 19 L6 2 L15 4 L12 20Z" fill="#fafafa" stroke="#8a8a8a" stroke-width=".9"/><path d="M7 5 L16 4 L19 7 L19 21 L8 21Z" fill="#d8e6f8" stroke="#7a8aa0" stroke-width=".9"/><path d="M16 4 V7 H19" fill="#eef4fc" stroke="#7a8aa0" stroke-width=".7"/></svg></div>
  <div class="tx" style="left:28px;top:188px;color:#000">Lorem Ipsum</div>
  <div class="tx" style="left:261px;top:188px;width:59px;text-align:right;color:#000">3.4 KB</div>
  <div class="tx" style="left:330px;top:188px;color:#000">plain text document</div>
  <div class="a" style="left:448px;top:188px;width:73px;height:20px;overflow:hidden"><span class="tx" style="left:4px;top:0;color:#000">today at 6:5</span></div>
  <div class="a" style="left:0;top:208px;width:261px;height:26px;background:#e2e1de"></div>
  <div class="a" style="left:261px;top:208px;width:260px;height:26px;background:#eeeeec"></div>
  <div class="a" style="left:3px;top:210px"><svg width="22" height="22" viewBox="0 0 22 22"><path d="M3 10 L11 14 L20 10 V18 L11 22 L3 18Z" fill="#a8804a" stroke="#2a1a08" stroke-width="1"/><path d="M11 14 V22" stroke="#2a1a08"/><path d="M3 10 L11 14 L20 10" fill="none" stroke="#2a1a08"/><path d="M6 3 L13 2 L16 9 L9 10Z" fill="#f4f4f4" stroke="#555" stroke-width=".8"/><path d="M8 4 L12 3.5 M8.5 6 L13 5.5" stroke="#c44" stroke-width=".8"/><path d="M3 10 L0.5 5 L7 7.5 L11 14Z" fill="#d8b078" stroke="#2a1a08" stroke-width=".9"/><path d="M20 10 L21.5 4 L15 6 L11 14Z" fill="#e8c890" stroke="#2a1a08" stroke-width=".9"/><path d="M6 17 Q9 15 12 18" stroke="#2a1a08" fill="none" stroke-width=".8"/></svg></div>
  <div class="tx" style="left:28px;top:214px;color:#000">perl-XML-Simple-2.14-1.fc4.noarch.rpm</div>
  <div class="tx" style="left:261px;top:214px;width:59px;text-align:right;color:#000">67.6 KB</div>
  <div class="tx" style="left:330px;top:214px;color:#000">RPM package</div>
  <div class="a" style="left:448px;top:214px;width:73px;height:20px;overflow:hidden"><span class="tx" style="left:4px;top:0;color:#000">yesterday at</span></div>
  <div class="a" style="left:0;top:234px;width:261px;height:26px;background:#f1f0ee"></div>
  <div class="a" style="left:261px;top:234px;width:260px;height:26px;background:#fff"></div>
  <div class="a" style="left:3px;top:236px"><svg width="22" height="22" viewBox="0 0 22 22"><path d="M2 19 L6 2 L15 4 L12 20Z" fill="#fafafa" stroke="#8a8a8a" stroke-width=".9"/><path d="M7 5 L16 4 L19 7 L19 21 L8 21Z" fill="#d8e6f8" stroke="#7a8aa0" stroke-width=".9"/><path d="M16 4 V7 H19" fill="#eef4fc" stroke="#7a8aa0" stroke-width=".7"/></svg></div>
  <div class="tx" style="left:28px;top:240px;color:#000">Untitled Document 1</div>
  <div class="tx" style="left:261px;top:240px;width:59px;text-align:right;color:#000">1.1 KB</div>
  <div class="tx" style="left:330px;top:240px;color:#000">plain text document</div>
  <div class="a" style="left:448px;top:240px;width:73px;height:20px;overflow:hidden"><span class="tx" style="left:4px;top:0;color:#000">yesterday at</span></div>
  <div class="a" style="left:521px;top:0;width:16px;height:246px;background:#d7d1c8;border-left:1px solid #bdb7ad"></div>
  <div class="sbb" style="left:521px;top:0;height:18px;width:15px"><div class="aru" style="left:3px;top:5px"></div></div>
  <div class="sbb" style="left:521px;top:18px;height:196px;width:15px"><div class="grip3" style="left:3px;top:50%"></div></div>
  <div class="sbb" style="left:521px;top:227px;height:18px;width:15px"><div class="ard" style="left:3px;top:6px"></div></div>
  <div class="a" style="left:0;top:246px;width:521px;height:16px;background:#d7d1c8;border-top:1px solid #bdb7ad"></div>
  <div class="sbb2" style="left:1px;top:247px;width:14px"><div class="arl"></div></div>
  <div class="sbb2" style="left:15px;top:247px;width:350px;background:linear-gradient(#f6f4f0,#e2ddd5)"><div class="grip3v"></div></div>
  <div class="sbb2" style="left:506px;top:247px;width:15px"><div class="arr2"></div></div>
  <div class="a" style="left:521px;top:246px;width:16px;height:16px;background:#efebe7"></div>
 </div>
 <div class="a" style="left:4px;top:401px;width:536px;height:1px;background:#d2ccc3"></div>
 <div class="tx" style="left:5px;top:401px;color:#222">"garnome-session" selected (460 bytes)</div>
 <svg class="a" style="right:4px;bottom:4px" width="14" height="14" viewBox="0 0 14 14"><path d="M13 1 L1 13 M13 5 L5 13 M13 9 L9 13" stroke="#8a857c" stroke-width="1" stroke-dasharray="1 1"/></svg>
</div>

<!-- GEDIT -->
<div class="win" id="gedit" style="left:173px;top:163px;width:586px;height:357px">
 <div class="tb"><div class="tt" style="left:24px;right:62px">Lorem Ipsum (~) - gedit</div>
  <svg class="a" style="left:3px;top:1px" width="19" height="19" viewBox="0 0 19 19"><rect x="1" y="1" width="16" height="17" rx="1.5" fill="#f4f4f2" stroke="#444" stroke-width="1.2"/><rect x="3" y="5" width="12" height="8" fill="#d0d0cc"/><path d="M4 14 L13 4" stroke="#333" stroke-width="2"/><path d="M4 14 L13 4" stroke="#d8d890" stroke-width=".8"/></svg>
  <div class="btns" style="width:58px"><div class="btn" style="left:0"><svg width="15" height="16" class="a" style="left:0;top:0"><rect x="4" y="10" width="8" height="2.2" fill="#000"/></svg></div><div class="btn" style="left:20px"><svg width="15" height="16" class="a" style="left:0;top:0"><rect x="4.5" y="4.5" width="7" height="7" fill="none" stroke="#000" stroke-width="1.2"/><rect x="4" y="4" width="8" height="2" fill="#000"/></svg></div><div class="btn" style="left:40px"><svg width="15" height="16" class="a" style="left:0;top:0"><path d="M4 4.5 L11 11.5 M11 4.5 L4 11.5" stroke="#000" stroke-width="2.2" stroke-linecap="round"/></svg></div></div>
 </div>
 <div class="mb" style="left:4px;top:23px;width:577px;height:25px">
  <div class="mi" style="left:7px"><u>F</u>ile</div><div class="mi" style="left:43px"><u>E</u>dit</div><div class="mi" style="left:79px"><u>V</u>iew</div><div class="mi" style="left:122px"><u>S</u>earch</div><div class="mi" style="left:177px"><u>T</u>ools</div><div class="mi" style="left:223px"><u>D</u>ocuments</div><div class="mi" style="left:304px"><u>H</u>elp</div>
 </div>
 <div class="a" style="left:4px;top:48px;width:577px;height:36px;border-bottom:1px solid #d2ccc3;box-shadow:0 1px 0 #fff">
  <div class="grip" style="left:3px;top:8px"></div>
  <svg class="a" style="left:18px;top:7px" width="22" height="22" viewBox="0 0 22 22"><path d="M1.5 1.5 H15 L18 4.5 V20.5 H1.5Z" fill="#fff" stroke="#222" stroke-width="1.2"/><path d="M12 7 H15 V10 H18 V13 H15 V16 H12 V13 H9 V10 H12Z" fill="#5ccd3c" stroke="#1f6a12" stroke-width="1"/></svg>
  <svg class="a" style="left:51px;top:9px" width="23" height="19" viewBox="0 0 23 19"><path d="M1 2 H8 L10 4 H19 V17 H1Z" fill="#d8b070" stroke="#6b5530"/><path d="M3 7 H22 L20 18 H1Z" fill="#f0cf8c" stroke="#6b5530"/></svg>
  <svg class="a" style="left:85px;top:14px" width="12" height="8" viewBox="0 0 12 8"><path d="M1.5 1.5 L6 6 L10.5 1.5" stroke="#000" stroke-width="2.4" fill="none"/></svg>
  <svg class="a" style="left:110px;top:7px" width="22" height="21" viewBox="0 0 22 21"><path d="M1.5 1.5 H18 L20.5 4 V19.5 H1.5Z" fill="#5558a0" stroke="#222145" stroke-width="1.3"/><rect x="5" y="2" width="12" height="9" fill="#f0f0f4"/><rect x="6" y="14" width="10" height="5.5" fill="#d8d8e0"/><rect x="8" y="15" width="2.5" height="3" fill="#333"/></svg>
  <div class="a" style="left:144px;top:6px;width:2px;height:25px;border-left:1px solid #d2ccc3;border-right:1px solid #fff"></div>
  <svg class="a" style="left:156px;top:7px" width="24" height="21" viewBox="0 0 24 21"><rect x="6" y="1" width="12" height="8" fill="#fff" stroke="#444"/><path d="M2 8 H22 Q23 8 23 10 V17 Q23 19 21 19 H3 Q1 19 1 17 V10 Q1 8 2 8Z" fill="#d8d8d8" stroke="#333"/><path d="M3 10 H21 V14 H3Z" fill="#3b8ce0"/><rect x="3" y="15" width="18" height="3" fill="#eee"/></svg>
  <div class="a" style="left:189px;top:6px;width:2px;height:25px;border-left:1px solid #d2ccc3;border-right:1px solid #fff"></div>
  <svg class="a" style="left:204px;top:8px" width="18" height="20" viewBox="0 0 18 20"><path d="M8 2 L2 7.5 L8 13 V10 Q13 10 13 14 Q13 17 11 19 Q17 17 16 11 Q15 6 8 5.5Z" fill="#e4e0da" stroke="#b8b3ab" stroke-width="1.2"/></svg>
  <svg class="a" style="left:239px;top:8px" width="18" height="20" viewBox="0 0 18 20"><path d="M10 2 L16 7.5 L10 13 V10 Q5 10 5 14 Q5 17 7 19 Q1 17 2 11 Q3 6 10 5.5Z" fill="#e4e0da" stroke="#b8b3ab" stroke-width="1.2"/></svg>
  <div class="a" style="left:269px;top:6px;width:2px;height:25px;border-left:1px solid #d2ccc3;border-right:1px solid #fff"></div>
  <svg class="a" style="left:280px;top:7px" width="26" height="23" viewBox="0 0 26 23"><path d="M1.5 3 H15 V16 H1.5Z" fill="#fff" stroke="#222"/><path d="M4 8 Q12 4 17 2 L19 3 L12 10Z" fill="#ddd" stroke="#333"/><path d="M4 11 Q12 13 17 20 L19 18 L12 9Z" fill="#ccc" stroke="#333"/><circle cx="19" cy="19" r="3.2" fill="#c8502a" stroke="#4a1a08"/><circle cx="22" cy="14" r="3.2" fill="#c8502a" stroke="#4a1a08"/><circle cx="19" cy="19" r="1" fill="#fff"/><circle cx="22" cy="14" r="1" fill="#fff"/></svg>
  <svg class="a" style="left:316px;top:7px" width="22" height="23" viewBox="0 0 22 23"><path d="M1.5 1.5 H12 L14 3.5 V15 H1.5Z" fill="#fff" stroke="#333"/><path d="M7.5 6.5 H17 L20.5 10 V21.5 H7.5Z" fill="#fff" stroke="#333"/><path d="M9.5 10 H17 M9.5 13 H18 M9.5 16 H18 M9.5 19 H18" stroke="#999" stroke-width=".8"/><path d="M3.5 5 H11 M3.5 8 H6" stroke="#999" stroke-width=".8"/></svg>
  <svg class="a" style="left:350px;top:6px" width="22" height="24" viewBox="0 0 22 24"><rect x="1.5" y="4" width="15" height="17" rx="1" fill="#b8742a" stroke="#4a2c10"/><rect x="5" y="1.5" width="8" height="5" rx="1.5" fill="#ccc" stroke="#444"/><path d="M8 9 H18 L20.5 11.5 V22.5 H8Z" fill="#fff" stroke="#333"/><path d="M10 13 H18 M10 16 H19 M10 19 H19" stroke="#999" stroke-width=".8"/></svg>
  <div class="a" style="left:384px;top:6px;width:2px;height:25px;border-left:1px solid #d2ccc3;border-right:1px solid #fff"></div>
  <svg class="a" style="left:396px;top:7px" width="24" height="23" viewBox="0 0 24 23"><path d="M1.5 1.5 H17 V20.5 H1.5Z" fill="#fff" stroke="#333"/><path d="M4 5 H9 M4 8 H7 M4 17 H13" stroke="#999" stroke-width=".8"/><path d="M15 14 L21 20" stroke="#c8501e" stroke-width="3.2" stroke-linecap="round"/><circle cx="11.5" cy="10.5" r="5.5" fill="#b8dcf8" stroke="#223" stroke-width="1.3"/><circle cx="10.5" cy="9.5" r="2.5" fill="#e8f6ff"/></svg>
  <svg class="a" style="left:428px;top:6px" width="26" height="24" viewBox="0 0 26 24"><path d="M6 3 H20 V22 H6Z" fill="#fff" stroke="#333"/><path d="M8 14 H14 M8 17 H12" stroke="#999" stroke-width=".8"/><path d="M6 10 L10 14" stroke="#c8501e" stroke-width="3" stroke-linecap="round"/><circle cx="5.5" cy="7.5" r="4.5" fill="#b8dcf8" stroke="#223" stroke-width="1.2"/><path d="M13 20 L23 4" stroke="#555" stroke-width="4"/><path d="M13 20 L23 4" stroke="#e8b040" stroke-width="2.4"/><path d="M22 3 L24 2 L24 5Z" fill="#c44"/></svg>
 </div>
 <!-- tab -->
 <div class="a" style="left:4px;top:84px;width:130px;height:31px;background:#eeeae5;border:1px solid #a8a298;border-bottom:none;border-top:2px solid #5d7487;border-radius:3px 3px 0 0"></div>
 <svg class="a" style="left:12px;top:92px" width="16" height="17" viewBox="0 0 16 17"><path d="M1 15 L4 1.5 L11 3 L9 16Z" fill="#fafafa" stroke="#9a9a9a" stroke-width=".8"/><path d="M5 4 L12 3.5 L15 6 L15 16 L6 16Z" fill="#dce8f8" stroke="#8a9ab0" stroke-width=".8"/></svg>
 <div class="tx" style="left:30px;top:93px">Lorem Ipsum</div>
 <svg class="a" style="left:116px;top:95px" width="9" height="9" viewBox="0 0 9 9"><path d="M1.5 1.5 L7.5 7.5 M7.5 1.5 L1.5 7.5" stroke="#000" stroke-width="2" stroke-linecap="round"/></svg>
 <div class="a" style="left:134px;top:114px;width:447px;height:1px;background:#a8a298"></div>
 <!-- text area -->
 <div class="a" style="left:4px;top:114px;width:578px;height:216px;background:#fff;border:1px solid #9d978c;border-right-color:#fff;border-bottom-color:#d4cec5;overflow:hidden">
  <div class="a" style="left:4px;top:2px;font-family:'Liberation Mono',monospace;font-size:15px;letter-spacing:1px;line-height:20px;white-space:pre;color:#000;-webkit-text-stroke:0.15px #000">Lorem ipsum dolor sit amet, consectetuer adipiscing
elit, sed diam nonummy nibh euismod tincidunt ut
laoreet dolore magna aliquam erat volutpat. Ut wisi
enim ad minim veniam, quis nostrud exerci tation
ullamcorper suscipit lobortis nisl ut aliquip ex ea
commodo consequat. Duis autem vel eum iriure dolor in
hendrerit in vulputate velit esse molestie consequat,
vel illum dolore eu feugiat nulla facilisis at vero
eros et accumsan et iusto odio dignissim qui blandit
praesent luptatum zzril delenit augue duis dolore te
feugait nulla facilisi.</div>
  <div class="a" style="left:555px;top:0;width:21px;height:216px;background:#efebe7;border-left:1px solid #c8c2b8"></div>
  <div class="sbb" style="left:559px;top:0;height:15px;width:15px"><div class="aru" style="left:3px;top:4px"></div></div>
  <div class="sbb" style="left:559px;top:15px;height:60px;width:15px"><div class="grip3" style="left:3px;top:12px;margin-top:0"></div></div>
 </div>
</div>

<!-- COMPUTER -->
<div class="win" id="comp" style="left:345px;top:314px;width:485px;height:266px">
 <div class="tb"><div class="tt" style="left:24px;right:62px">Computer</div>
  <svg class="a" style="left:4px;top:3px" width="18" height="16" viewBox="0 0 18 16"><path d="M1 3 L12 1 L13 10 L2 12Z" fill="#ddd" stroke="#555" stroke-width=".8"/><path d="M2.5 4 L11 2.5 L11.5 9 L3 10.5Z" fill="#6aaee0"/><path d="M12 3 L17 6 V14 L13 12Z" fill="#f0f0f0" stroke="#666" stroke-width=".8"/><ellipse cx="7" cy="13" rx="5" ry="2.2" fill="#ccc" stroke="#666" stroke-width=".8"/></svg>
  <div class="btns" style="width:58px"><div class="btn" style="left:0"><svg width="15" height="16" class="a" style="left:0;top:0"><rect x="4" y="10" width="8" height="2.2" fill="#000"/></svg></div><div class="btn" style="left:20px"><svg width="15" height="16" class="a" style="left:0;top:0"><rect x="4.5" y="4.5" width="7" height="7" fill="none" stroke="#000" stroke-width="1.2"/><rect x="4" y="4" width="8" height="2" fill="#000"/></svg></div><div class="btn" style="left:40px"><svg width="15" height="16" class="a" style="left:0;top:0"><path d="M4 4.5 L11 11.5 M11 4.5 L4 11.5" stroke="#000" stroke-width="2.2" stroke-linecap="round"/></svg></div></div>
 </div>
 <div class="mb" style="left:4px;top:23px;width:476px;height:25px">
  <div class="mi" style="left:8px"><u>F</u>ile</div><div class="mi" style="left:43px"><u>E</u>dit</div><div class="mi" style="left:80px"><u>V</u>iew</div><div class="mi" style="left:123px"><u>P</u>laces</div><div class="mi" style="left:177px"><u>H</u>elp</div>
 </div>
 <div class="a" style="left:4px;top:48px;width:476px;height:187px;background:#fff;border-bottom:1px solid #cfc9bf"></div>
 <div class="a" style="left:67px;top:66px"><svg width="40" height="30" viewBox="0 0 40 30"><defs><linearGradient id="dg" x1="0" y1="0" x2="1" y2="1"><stop offset="0" stop-color="#e8e8e8"/><stop offset="1" stop-color="#c4c4c4"/></linearGradient></defs><path d="M1.5 10 L23 1.5 L38.5 12 V20 L17 28.5 L1.5 18Z" fill="#d4d4d4" stroke="#333" stroke-width="1.3" stroke-linejoin="round"/><path d="M1.5 10 L23 1.5 L38.5 12 L17 20.5Z" fill="url(#dg)" stroke="#555" stroke-width=".8"/><path d="M17 20.5 V28.5" stroke="#666" stroke-width=".8"/><path d="M19 24 L32 19" stroke="#777" stroke-width="1.2"/><path d="M32 19.5 L36 18" stroke="#3ab03a" stroke-width="2"/></svg></div>
 <div class="tx" style="left:37px;top:102px;width:100px;text-align:center">Floppy Drive</div>
 <div class="a" style="left:222px;top:66px"><svg width="40" height="30" viewBox="0 0 40 30"><defs><linearGradient id="dg" x1="0" y1="0" x2="1" y2="1"><stop offset="0" stop-color="#e8e8e8"/><stop offset="1" stop-color="#c4c4c4"/></linearGradient></defs><path d="M1.5 10 L23 1.5 L38.5 12 V20 L17 28.5 L1.5 18Z" fill="#d4d4d4" stroke="#333" stroke-width="1.3" stroke-linejoin="round"/><path d="M1.5 10 L23 1.5 L38.5 12 L17 20.5Z" fill="url(#dg)" stroke="#555" stroke-width=".8"/><path d="M17 20.5 V28.5" stroke="#666" stroke-width=".8"/><path d="M19 24 L32 19" stroke="#777" stroke-width="1.2"/><path d="M32 19.5 L36 18" stroke="#3ab03a" stroke-width="2"/></svg></div>
 <div class="tx" style="left:192px;top:102px;width:100px;text-align:center">CD-ROM Drive</div>
 <div class="a" style="left:377px;top:66px"><svg width="40" height="30" viewBox="0 0 40 30"><defs><linearGradient id="dg" x1="0" y1="0" x2="1" y2="1"><stop offset="0" stop-color="#e8e8e8"/><stop offset="1" stop-color="#c4c4c4"/></linearGradient></defs><path d="M1.5 10 L23 1.5 L38.5 12 V20 L17 28.5 L1.5 18Z" fill="#d4d4d4" stroke="#333" stroke-width="1.3" stroke-linejoin="round"/><path d="M1.5 10 L23 1.5 L38.5 12 L17 20.5Z" fill="url(#dg)" stroke="#555" stroke-width=".8"/><path d="M17 20.5 V28.5" stroke="#666" stroke-width=".8"/><path d="M19 24 L32 19" stroke="#777" stroke-width="1.2"/><path d="M32 19.5 L36 18" stroke="#3ab03a" stroke-width="2"/></svg></div>
 <div class="tx" style="left:347px;top:102px;width:100px;text-align:center">Filesystem</div>
 <div class="a" style="left:65px;top:130px"><svg width="44" height="46" viewBox="0 0 44 46"><g stroke="#333" stroke-width="1"><path d="M24 6 L36 3 L37 14 L25 17Z" fill="#ddd"/><path d="M26 7 L35 5 L35.5 12.5 L26.5 14.5Z" fill="#7ab8e8"/><path d="M36 5 L42 9 L42 18 L37 16Z" fill="#f4f4f4"/><path d="M2 11 L18 7 L19 21 L3 25Z" fill="#ddd"/><path d="M4 12 L17 9 L17.5 19 L4.5 22Z" fill="#7ab8e8"/><ellipse cx="10" cy="26" rx="8" ry="3" fill="#ccc"/><path d="M14 19 L34 14 L35 33 L15 38Z" fill="#ddd"/><path d="M16 20 L33 16 L33.5 30 L16.5 34Z" fill="#7ab8e8"/><path d="M35 16 L43 22 L43 38 L36 34Z" fill="#f4f4f4"/><ellipse cx="24" cy="40" rx="10" ry="4" fill="#ccc"/></g></svg></div>
 <div class="tx" style="left:36px;top:179px;width:100px;text-align:center">Network</div>
 <div class="a" style="left:4px;top:235px;width:104px;height:26px;border:1px solid #9f998f;border-radius:3px;background:linear-gradient(#f4f2ee,#e0dbd3)"></div>
 <svg class="a" style="left:8px;top:240px" width="20" height="16" viewBox="0 0 20 16"><path d="M1 1.5 H7 L9 3.5 H17 V14.5 H1Z" fill="#d8b070" stroke="#6b5530"/><path d="M2.5 6 H19.5 L17.5 15 H1Z" fill="#f0cf8c" stroke="#6b5530"/></svg>
 <div class="tx" style="left:30px;top:241px">Computer</div>
 <svg class="a" style="left:92px;top:244px" width="11" height="8" viewBox="0 0 11 8"><path d="M1.5 1.5 L5.5 5.5 L9.5 1.5" stroke="#000" stroke-width="2.2" fill="none"/></svg>
 <div class="tx" style="left:112px;top:241px;color:#222">4 items</div>
 <svg class="a" style="right:4px;bottom:4px" width="14" height="14" viewBox="0 0 14 14"><path d="M13 1 L1 13 M13 5 L5 13 M13 9 L9 13" stroke="#8a857c" stroke-width="1" stroke-dasharray="1 1"/></svg>
</div>

<!-- RHYTHMBOX -->
<div class="win" id="rb" style="left:13px;top:632px;width:751px;height:371px">
 <div class="tb act"><div class="tt" style="left:24px;right:62px">MIT Concert Choir (Cutter) - Cantata 140. 2. Recitative</div>
  <svg class="a" style="left:5px;top:2px" width="16" height="18" viewBox="0 0 16 18"><rect x="1" y="1" width="14" height="16" rx="1" fill="#c8c8c8" stroke="#333" stroke-width=".9"/><rect x="3" y="2.5" width="10" height="2" fill="#e8c040"/><rect x="2.5" y="6" width="11" height="4" fill="#eee"/><path d="M5 13 H11" stroke="#333" stroke-width="1.2"/></svg>
  <div class="btns" style="width:58px"><div class="btn" style="left:0"><svg width="15" height="16" class="a" style="left:0;top:0"><rect x="4" y="10" width="8" height="2.2" fill="#fff"/></svg></div><div class="btn" style="left:20px"><svg width="15" height="16" class="a" style="left:0;top:0"><rect x="4.5" y="4.5" width="7" height="7" fill="none" stroke="#fff" stroke-width="1.2"/><rect x="4" y="4" width="8" height="2" fill="#fff"/></svg></div><div class="btn" style="left:40px"><svg width="15" height="16" class="a" style="left:0;top:0"><path d="M4 4.5 L11 11.5 M11 4.5 L4 11.5" stroke="#fff" stroke-width="2.2" stroke-linecap="round"/></svg></div></div>
 </div>
 <div class="mb" style="left:4px;top:23px;width:742px;height:25px">
  <div class="mi" style="left:8px"><u>M</u>usic</div>
  <div class="mi" style="left:57px"><u>E</u>dit</div>
  <div class="mi" style="left:94px"><u>V</u>iew</div>
  <div class="mi" style="left:137px"><u>C</u>ontrol</div>
  <div class="mi" style="left:193px"><u>H</u>elp</div>
 </div>
 <div class="a" style="left:9px;top:60px;width:34px;height:34px;border:1px solid #9d978c;border-radius:4px;background:linear-gradient(#f4f2ee,#dcd6cd)"><svg class="a" style="left:0;top:0" width="32" height="32" viewBox="0 0 32 32"><defs><linearGradient id="trg1" x1="0" x2="1"><stop offset="0" stop-color="#555"/><stop offset="1" stop-color="#eee"/></linearGradient><linearGradient id="trg2" x1="1" x2="0"><stop offset="0" stop-color="#555"/><stop offset="1" stop-color="#eee"/></linearGradient></defs><rect x="9.5" y="10" width="3" height="13" fill="#fff" stroke="#111" stroke-width="1.2"/><path d="M23 10 L14 16.5 L23 23Z" fill="url(#trg1)" stroke="#111" stroke-width="1.2"/></svg></div>
 <div class="a" style="left:48px;top:60px;width:34px;height:34px;border:1px solid #9d978c;border-radius:4px;background:linear-gradient(#f4f2ee,#dcd6cd)"><svg class="a" style="left:0;top:0" width="32" height="32" viewBox="0 0 32 32"><path d="M12.5 10 L21.5 16.5 L12.5 23Z" fill="url(#trg2)" stroke="#111" stroke-width="1.2"/></svg></div>
 <div class="a" style="left:87px;top:60px;width:34px;height:34px;border:1px solid #9d978c;border-radius:4px;background:linear-gradient(#f4f2ee,#dcd6cd)"><svg class="a" style="left:0;top:0" width="32" height="32" viewBox="0 0 32 32"><path d="M10 10 L19 16.5 L10 23Z" fill="url(#trg2)" stroke="#111" stroke-width="1.2"/><rect x="20.5" y="10" width="3" height="13" fill="#fff" stroke="#111" stroke-width="1.2"/></svg></div>
 <div class="tx" style="left:133px;top:55px;font-weight:bold;font-size:16px;line-height:18px">Cantata 140. 2. Recitative</div>
 <div class="tx" style="left:133px;top:81px">from <span class="lk">Bach and Schubert</span> by <span class="lk">MIT Concert Choir (Cutter)</span></div>
 <div class="a" style="left:546px;top:65px;width:147px;height:6px;background:#c8c1b6;border:1px solid #a8a196;border-radius:2px"></div>
 <div class="a" style="left:546px;top:65px;width:8px;height:6px;background:#6d8ca4;border:1px solid #4a6478"></div>
 <div class="a" style="left:552px;top:61px;width:31px;height:15px;border:1px solid #9a948a;border-radius:4px;background:linear-gradient(#f8f6f2,#e0dbd3)"><div class="a" style="left:11px;top:4px;width:7px;height:6px;background:repeating-linear-gradient(90deg,#a8a298 0 1px,transparent 1px 3px)"></div></div>
 <div class="tx" style="left:623px;top:79px;width:70px;text-align:right">0:03 of 1:07</div>
 <div class="a" style="left:707px;top:60px;width:34px;height:34px;border:1px solid #9d978c;border-radius:4px;background:linear-gradient(#f4f2ee,#dcd6cd)"><svg class="a" style="left:0;top:0" width="32" height="32" viewBox="0 0 32 32"><path d="M6 13 H10 L17 7 V25 L10 19 H6Z" fill="#888" stroke="#111" stroke-width="1.2"/><path d="M19.5 12 Q21.5 16 19.5 20" stroke="#111" stroke-width="1.5" fill="none"/><path d="M22 10 Q25 16 22 22" stroke="#111" stroke-width="1.5" fill="none"/><path d="M24.5 8 Q28.5 16 24.5 24" stroke="#111" stroke-width="1.5" fill="none"/></svg></div>
 <div class="a" style="left:9px;top:106px;width:732px;height:2px;border-top:1px solid #d2ccc3;border-bottom:1px solid #fff"></div>
 <div class="a" style="left:9px;top:113px;width:154px;height:222px;background:#fff;border:1px solid #9d978c;border-right-color:#fff;border-bottom-color:#fff;box-shadow:1px 1px 0 #d8d3ca">
  <div class="a hdr" style="left:0;top:0;width:152px;height:26px"><span class="tx" style="left:3px;top:6px"><u>S</u>ource</span></div>
  <div class="a" style="left:0;top:26px;width:152px;height:27px;background:linear-gradient(#94927f,#7e7c6b)"></div>
  <svg class="a" style="left:4px;top:29px" width="22" height="22" viewBox="0 0 22 22"><circle cx="14" cy="8" r="7" fill="#ddd" stroke="#111"/><circle cx="11" cy="11" r="7" fill="#e4e4e4" stroke="#111"/><circle cx="8" cy="14" r="7" fill="#eee" stroke="#111"/><circle cx="8" cy="14" r="2" fill="#fff" stroke="#111"/></svg>
  <div class="tx" style="left:28px;top:33px;color:#fff">Library</div>
  <svg class="a" style="left:4px;top:56px" width="22" height="22" viewBox="0 0 22 22"><path d="M1 2 L6 8 M3 1 L8 6 M1 5 L5 9" stroke="#bbb" stroke-width=".8"/><circle cx="12" cy="11" r="7.5" fill="#ddd" stroke="#333"/><path d="M8 7 L16 15" stroke="#666"/><path d="M14 18 L18 14 L21 20Z" fill="#ccc" stroke="#333"/></svg>
  <div class="tx" style="left:28px;top:59px">Radio</div>
 </div>
 <div class="a" style="left:164px;top:204px;width:5px;height:42px;background:repeating-linear-gradient(#c0bab0 0 1px,#fff 1px 2px,transparent 2px 3px)"></div>
 <svg class="a" style="left:174px;top:119px" width="8" height="7" viewBox="0 0 8 7"><path d="M0.5 0.5 H7.5 L4 6Z" fill="#fff" stroke="#000" stroke-width="1"/></svg>
 <div class="tx" style="left:189px;top:118px">Hide <u>B</u>rowser</div>
 <div class="tx" style="left:553px;top:119px"><u>S</u>earch:</div>
 <div class="a" style="left:603px;top:113px;width:138px;height:25px;background:#fff;border:1px solid #9b958b;border-radius:3px"></div>
 <div class="a" style="left:169px;top:143px;width:265px;height:79px;background:#fff;border:1px solid #9d978c;border-right-color:#e8e4de;border-bottom-color:#e8e4de;overflow:hidden">
  <div class="a hdr" style="left:0;top:0;width:263px;height:26px;border-right:none"><span class="tx" style="left:3px;top:6px">Artist</span></div>
  <div class="a" style="left:0;top:26px;width:263px;height:24px;background:linear-gradient(#94927f,#7e7c6b)"></div>
  <div class="tx" style="left:4px;top:30px;color:#fff;font-weight:bold">All</div>
  <div class="tx" style="left:4px;top:54px">-</div>
 </div>
 <div class="a" style="left:457px;top:143px;width:266px;height:79px;background:#fff;border:1px solid #9d978c;border-right-color:#e8e4de;border-bottom-color:#e8e4de;overflow:hidden">
  <div class="a hdr" style="left:0;top:0;width:264px;height:26px;border-right:none"><span class="tx" style="left:3px;top:6px">Album</span></div>
  <div class="a" style="left:0;top:26px;width:264px;height:24px;background:linear-gradient(#94927f,#7e7c6b)"></div>
  <div class="tx" style="left:4px;top:30px;color:#fff;font-weight:bold">All</div>
  <div class="tx" style="left:4px;top:54px">Bach and Schubert</div>
 </div>
 <div class="a" style="left:437px;top:143px;width:16px;height:79px;background:#d7d1c8;border-radius:3px"><div class="sbb" style="left:0;top:0;height:18px;width:16px"><div class="aru" style="left:3px;top:5px"></div></div><div class="sbb" style="left:0;top:18px;height:30px;width:16px"><div class="grip3" style="left:3px"></div></div><div class="sbb" style="left:0;top:61px;height:18px;width:16px"><div class="ard" style="left:3px;top:6px"></div></div></div>
 <div class="a" style="left:725px;top:143px;width:16px;height:79px;background:#d7d1c8;border-radius:3px"><div class="sbb" style="left:0;top:0;height:18px;width:16px"><div class="aru" style="left:3px;top:5px"></div></div><div class="sbb" style="left:0;top:18px;height:30px;width:16px"><div class="grip3" style="left:3px"></div></div><div class="sbb" style="left:0;top:61px;height:18px;width:16px"><div class="ard" style="left:3px;top:6px"></div></div></div>
 <div class="a" style="left:435px;top:222px;width:42px;height:4px;background:repeating-linear-gradient(90deg,#c0bab0 0 1px,#fff 1px 2px,transparent 2px 3px)"></div>
 <div class="a" style="left:169px;top:228px;width:554px;height:107px;background:#fff;border:1px solid #9d978c;border-right-color:#e8e4de;border-bottom:none;overflow:hidden">
  <div class="a hdr" style="left:0px;top:0;width:21px;height:26px"><span class="tx" style="left:4px;top:6px"></span></div>
  <div class="a hdr" style="left:21px;top:0;width:43px;height:26px"><span class="tx" style="left:4px;top:6px">Tra<u>c</u>k</span></div>
  <div class="a hdr" style="left:64px;top:0;width:157px;height:26px"><span class="tx" style="left:4px;top:6px"><u>T</u>itle</span></div>
  <div class="a hdr" style="left:221px;top:0;width:64px;height:26px"><span class="tx" style="left:4px;top:6px">Ge<u>n</u>re</span></div>
  <div class="a hdr" style="left:285px;top:0;width:115px;height:26px"><span class="tx" style="left:4px;top:6px">Art<u>i</u>st</span></div>
  <div class="a hdr" style="left:400px;top:0;width:114px;height:26px"><span class="tx" style="left:4px;top:6px">A<u>l</u>bum</span></div>
  <div class="a hdr" style="left:514px;top:0;width:40px;height:26px"><span class="tx" style="left:4px;top:6px">Ti<u>m</u>e</span></div>
  <div class="a" style="left:0;top:26px;width:552px;height:23px;background:#fff"></div>
  <div class="a" style="left:25px;top:32px;width:20px;height:20px;overflow:hidden"><span class="tx" style="left:0;top:0;color:#000"></span></div>
  <div class="a" style="left:68px;top:32px;width:153px;height:20px;overflow:hidden"><span class="tx" style="left:0;top:0;color:#000">Corelli Trio Sonata 11, m3</span></div>
  <div class="a" style="left:224px;top:32px;width:61px;height:20px;overflow:hidden"><span class="tx" style="left:0;top:0;color:#000">Unknown</span></div>
  <div class="a" style="left:288px;top:32px;width:112px;height:20px;overflow:hidden"><span class="tx" style="left:0;top:0;color:#000">RP and E Goldstei</span></div>
  <div class="a" style="left:403px;top:32px;width:111px;height:20px;overflow:hidden"><span class="tx" style="left:0;top:0;color:#000">Unknown</span></div>
  <div class="a" style="left:517px;top:32px;width:37px;height:20px;overflow:hidden"><span class="tx" style="left:0;top:0;color:#000">1:05</span></div>
  <div class="a" style="left:0;top:49px;width:552px;height:23px;background:#eeeeec"></div>
  <div class="a" style="left:25px;top:55px;width:20px;height:20px;overflow:hidden"><span class="tx" style="left:0;top:0;color:#000"></span></div>
  <div class="a" style="left:68px;top:55px;width:153px;height:20px;overflow:hidden"><span class="tx" style="left:0;top:0;color:#000">Corelli Trio Sonata 11, m2</span></div>
  <div class="a" style="left:224px;top:55px;width:61px;height:20px;overflow:hidden"><span class="tx" style="left:0;top:0;color:#000">Unknown</span></div>
  <div class="a" style="left:288px;top:55px;width:112px;height:20px;overflow:hidden"><span class="tx" style="left:0;top:0;color:#000">RP and E Goldstei</span></div>
  <div class="a" style="left:403px;top:55px;width:111px;height:20px;overflow:hidden"><span class="tx" style="left:0;top:0;color:#000">Unknown</span></div>
  <div class="a" style="left:517px;top:55px;width:37px;height:20px;overflow:hidden"><span class="tx" style="left:0;top:0;color:#000">1:34</span></div>
  <div class="a" style="left:0;top:72px;width:552px;height:23px;background:linear-gradient(#94927f,#7e7c6b)"></div>
  <svg class="a" style="left:4px;top:77px" width="14" height="12" viewBox="0 0 14 12"><path d="M1 4 H3.5 L7 1 V11 L3.5 8 H1Z" fill="#fff"/><path d="M9 3.5 Q10.5 6 9 8.5 M11 2 Q13.5 6 11 10" stroke="#fff" fill="none" stroke-width="1.2"/></svg>
  <div class="a" style="left:25px;top:78px;width:20px;height:20px;overflow:hidden"><span class="tx" style="left:0;top:0;color:#fff">9</span></div>
  <div class="a" style="left:68px;top:78px;width:153px;height:20px;overflow:hidden"><span class="tx" style="left:0;top:0;color:#fff">Cantata 140. 2. Recitative</span></div>
  <div class="a" style="left:224px;top:78px;width:61px;height:20px;overflow:hidden"><span class="tx" style="left:0;top:0;color:#fff">Unknown</span></div>
  <div class="a" style="left:288px;top:78px;width:112px;height:20px;overflow:hidden"><span class="tx" style="left:0;top:0;color:#fff">MIT Concert Choir</span></div>
  <div class="a" style="left:403px;top:78px;width:111px;height:20px;overflow:hidden"><span class="tx" style="left:0;top:0;color:#fff">Bach and Schubert</span></div>
  <div class="a" style="left:517px;top:78px;width:37px;height:20px;overflow:hidden"><span class="tx" style="left:0;top:0;color:#fff">1:07</span></div>
  <div class="a" style="left:0;top:95px;width:552px;height:23px;background:#eeeeec"></div>
  <div class="a" style="left:25px;top:101px;width:20px;height:20px;overflow:hidden"><span class="tx" style="left:0;top:0;color:#000"></span></div>
  <div class="a" style="left:68px;top:101px;width:153px;height:20px;overflow:hidden"><span class="tx" style="left:0;top:0;color:#000">3 trumpets, 4</span></div>
  <div class="a" style="left:224px;top:101px;width:61px;height:20px;overflow:hidden"><span class="tx" style="left:0;top:0;color:#000">Unknown</span></div>
  <div class="a" style="left:288px;top:101px;width:112px;height:20px;overflow:hidden"><span class="tx" style="left:0;top:0;color:#000">Unknown</span></div>
  <div class="a" style="left:403px;top:101px;width:111px;height:20px;overflow:hidden"><span class="tx" style="left:0;top:0;color:#000">Unknown</span></div>
  <div class="a" style="left:517px;top:101px;width:37px;height:20px;overflow:hidden"><span class="tx" style="left:0;top:0;color:#000">2:07</span></div>
 </div>
 <div class="a" style="left:725px;top:228px;width:16px;height:106px;background:#d7d1c8;border-radius:3px"><div class="sbb" style="left:0;top:0;height:18px;width:16px"><div class="aru" style="left:3px;top:5px"></div></div><div class="sbb" style="left:0;top:18px;height:32px;width:16px"><div class="grip3" style="left:3px"></div></div><div class="sbb" style="left:0;top:88px;height:18px;width:16px"><div class="ard" style="left:3px;top:6px"></div></div></div>
 <div class="a" style="left:11px;top:344px;width:13px;height:13px;border:1px solid #7d776d;background:#fff"></div>
 <div class="tx" style="left:29px;top:344px"><u>S</u>huffle</div>
 <div class="a" style="left:79px;top:344px;width:13px;height:13px;border:1px solid #7d776d;background:#fff"></div>
 <div class="tx" style="left:97px;top:344px"><u>R</u>epeat</div>
 <div class="tx" style="left:404px;top:344px">11 songs, 21 minutes, 20.2 MB</div>
 <div class="a" style="left:592px;top:341px;width:149px;height:19px;border:1px solid #5f6d78;background:repeating-linear-gradient(-60deg,#8aa6bc 0 10px,#7f9bb2 10px 20px);box-shadow:inset 0 1px 0 #b8cad8"></div>
</div>

<!-- GTHUMB -->
<div class="win" id="gt" style="left:779px;top:594px;width:569px;height:412px">
 <div class="tb"><div class="tt" style="left:24px;right:62px">default.png</div>
  <svg class="a" style="left:4px;top:2px" width="19" height="19" viewBox="0 0 19 19"><rect x="7" y="1" width="11" height="9" fill="#ddd" stroke="#555" stroke-width=".8"/><rect x="8.5" y="2.5" width="8" height="6" fill="#7a9a60"/><circle cx="7" cy="11" r="5" fill="#e8eef2" stroke="#333" stroke-width="1.2"/><path d="M10.5 14.5 L15 18.5" stroke="#333" stroke-width="2.2"/></svg>
  <div class="btns" style="width:58px"><div class="btn" style="left:0"><svg width="15" height="16" class="a" style="left:0;top:0"><rect x="4" y="10" width="8" height="2.2" fill="#000"/></svg></div><div class="btn" style="left:20px"><svg width="15" height="16" class="a" style="left:0;top:0"><rect x="4.5" y="4.5" width="7" height="7" fill="none" stroke="#000" stroke-width="1.2"/><rect x="4" y="4" width="8" height="2" fill="#000"/></svg></div><div class="btn" style="left:40px"><svg width="15" height="16" class="a" style="left:0;top:0"><path d="M4 4.5 L11 11.5 M11 4.5 L4 11.5" stroke="#000" stroke-width="2.2" stroke-linecap="round"/></svg></div></div>
 </div>
 <div class="mb" style="left:4px;top:23px;width:560px;height:25px">
  <div class="mi" style="left:8px"><u>F</u>ile</div>
  <div class="mi" style="left:43px"><u>E</u>dit</div>
  <div class="mi" style="left:79px"><u>V</u>iew</div>
  <div class="mi" style="left:123px"><u>I</u>mage</div>
  <div class="mi" style="left:173px"><u>B</u>ookmarks</div>
  <div class="mi" style="left:253px"><u>T</u>ools</div>
  <div class="mi" style="left:299px"><u>H</u>elp</div>
 </div>
 <div class="grip" style="left:7px;top:63px;height:24px"></div>
 <div class="a" style="left:15px;top:49px;width:76px;height:51px;border:1px solid #9f998e;border-radius:4px;background:linear-gradient(#cfcac2,#d8d3cb)"></div>
 <svg class="a" style="left:41px;top:56px" width="24" height="19" viewBox="0 0 24 19"><path d="M1.5 2 H8 L10 4 H19 V17 H1.5Z" fill="#d4d4b4" stroke="#333" stroke-width="1"/><path d="M4 7 H23 L20 18 H1.5Z" fill="#e6e6c8" stroke="#333" stroke-width="1"/></svg>
 <div class="tx" style="left:13px;top:80px;width:80px;text-align:center;color:#000">Folders</div>
 <svg class="a" style="left:116px;top:54px" width="24" height="22" viewBox="0 0 24 22"><path d="M8 1 L22 3 L16 19 L2 17Z" fill="#3a5a88" stroke="#111" stroke-width="1"/><path d="M2 17 L16 19 L17 21 L3 19.5Z" fill="#f4f4f4" stroke="#222" stroke-width=".8"/><path d="M5 8 L9 3" stroke="#6a8ab8" stroke-width="1.5"/></svg>
 <div class="tx" style="left:88px;top:80px;width:80px;text-align:center;color:#000">Catalogs</div>
 <svg class="a" style="left:194px;top:56px" width="22" height="18" viewBox="0 0 22 18"><rect x="1" y="1" width="20" height="16" fill="#b8d0e8" stroke="#111" stroke-width="1.2"/><path d="M2 16 V11 L7 7 L12 11 L16 8 L20 11 V16Z" fill="#6a9a58"/><circle cx="16" cy="5" r="2.2" fill="#fff"/></svg>
 <div class="tx" style="left:165px;top:80px;width:80px;text-align:center;color:#000">Image</div>
 <div class="a" style="left:253px;top:60px;width:2px;height:30px;border-left:1px solid #d2ccc3;border-right:1px solid #fff"></div>
 <svg class="a" style="left:284px;top:56px" width="18" height="18" viewBox="0 0 18 18"><path d="M1 9 L8 2 V6 H17 V12 H8 V16Z" fill="#d8d5d0" stroke="#bdb9b2" stroke-width="1"/></svg>
 <div class="tx" style="left:252px;top:80px;width:80px;text-align:center;color:#a8a49c">Back</div>
 <svg class="a" style="left:360px;top:56px" width="18" height="18" viewBox="0 0 18 18"><path d="M17 9 L10 2 V6 H1 V12 H10 V16Z" fill="#d8d5d0" stroke="#bdb9b2" stroke-width="1"/></svg>
 <div class="tx" style="left:329px;top:80px;width:80px;text-align:center;color:#a8a49c">Forward</div>
 <svg class="a" style="left:432px;top:55px" width="26" height="23" viewBox="0 0 26 23"><path d="M5 11 V21.5 H21 V11" fill="#c8601c" stroke="#1a1008" stroke-width="1.3"/><path d="M5 13 H21" stroke="#e88040" stroke-width="1" opacity=".6"/><path d="M1.5 12.5 L13 2 L24.5 12.5 L21 13 L13 6 L5 13Z" fill="#555" stroke="#1a1a1a" stroke-width="1.2" stroke-linejoin="round"/><path d="M6 8 L13 2 L20 8 L13 4.5Z" fill="#7a7a7a"/><rect x="11.5" y="14" width="4.5" height="7.5" fill="#fff" stroke="#333" stroke-width=".6"/><circle cx="14.8" cy="17.5" r=".6" fill="#333"/></svg>
 <div class="tx" style="left:406px;top:80px;width:80px;text-align:center;color:#000">Home</div>
 <div class="a" style="left:488px;top:60px;width:2px;height:30px;border-left:1px solid #d2ccc3;border-right:1px solid #fff"></div>
 <svg class="a" style="left:545px;top:71px" width="11" height="8" viewBox="0 0 11 8"><path d="M1.5 1.5 L5.5 5.5 L9.5 1.5" stroke="#000" stroke-width="2.2" fill="none"/></svg>
 <div class="a" style="left:5px;top:102px;width:157px;height:24px;background:#fff;border:1px solid #9b958b;border-radius:3px;overflow:hidden"><span class="tx" style="left:-4px;top:4px">share/backgrounds/images</span></div>
 <div class="a" style="left:5px;top:130px;width:157px;height:257px;background:#fff;border:1px solid #b8b2a8;border-right-color:#e8e4de;border-bottom-color:#e8e4de"></div>
 <svg class="a" style="left:7px;top:133px" width="15" height="15" viewBox="0 0 15 15"><defs><linearGradient id="upg2" x1="0" x2="1"><stop offset="0" stop-color="#bcd8f4"/><stop offset="1" stop-color="#3a6aa8"/></linearGradient></defs><path d="M7.5 1 L14 7.5 H10.5 V14 H4.5 V7.5 H1Z" fill="url(#upg2)" stroke="#0f1e38" stroke-width="1.2" stroke-linejoin="round"/></svg>
 <div class="tx" style="left:25px;top:135px">..</div>
 <div class="a" style="left:163px;top:223px;width:4px;height:42px;background:repeating-linear-gradient(#c0bab0 0 1px,#fff 1px 2px,transparent 2px 3px)"></div>
 <div class="a" style="left:168px;top:101px;width:395px;height:286px;background:#fff;border:1px solid #b8b2a8;border-right-color:#e8e4de;border-bottom-color:#e8e4de"></div>
 <div class="a" style="left:185px;top:118px;width:110px;height:110px;background:#fff;border:1px solid #d8d4cc;border-right:2px solid #111;border-bottom:2px solid #111"></div>
 <div class="a" style="left:192px;top:137px;width:96px;height:72px"><svg width="96" height="72" viewBox="0 0 96 72"><defs><filter id="tb1"><feGaussianBlur stdDeviation=".6"/></filter><filter id="tb1b"><feGaussianBlur stdDeviation="3"/></filter></defs><rect width="96" height="72" fill="#02021a"/><ellipse cx="82" cy="60" rx="20" ry="12" fill="#0a1a60" opacity=".7" filter="url(#tb1b)"/><g filter="url(#tb1)" fill="none"><path d="M68 55 Q80 60 96 70" stroke="#3a4af0" stroke-width="2.2"/><path d="M57 69 Q68 66 76 56 Q78 54 79 58" stroke="#60b8ff" stroke-width="1.3"/><path d="M57 63 Q64 60 68 59" stroke="#40a0e8" stroke-width="1.1"/><path d="M72 54 Q84 48 96 44" stroke="#2060c0" stroke-width="1.5" opacity=".8"/><path d="M60 52 Q62 60 70 62" stroke="#2040a0" stroke-width=".8"/></g><rect x="61" y="49.5" width="10" height="2.2" fill="#d8dcf0" opacity=".85"/></svg></div>
 <div class="a" style="left:310px;top:118px;width:110px;height:110px;background:#fff;border:1px solid #d8d4cc;border-right:2px solid #111;border-bottom:2px solid #111"></div>
 <div class="a" style="left:317px;top:137px;width:96px;height:72px"><svg width="96" height="72" viewBox="0 0 96 72"><defs><filter id="tb2"><feGaussianBlur stdDeviation=".9"/></filter><radialGradient id="tg2" cx=".3" cy=".3" r=".8"><stop offset="0" stop-color="#6a98d8"/><stop offset=".6" stop-color="#2a58a8"/><stop offset="1" stop-color="#10306a"/></radialGradient><clipPath id="ec"><circle cx="-14" cy="92" r="60"/></clipPath></defs><rect width="96" height="72" fill="#000"/><circle cx="-14" cy="92" r="60" fill="url(#tg2)"/><g clip-path="url(#ec)" filter="url(#tb2)"><path d="M0 40 Q8 38 14 46 Q10 52 18 56 Q24 60 22 72 L0 72Z" fill="#e8eef8" opacity=".75"/><path d="M20 38 Q32 44 30 54 Q40 62 46 72 L36 72 Q30 62 24 56 Q28 48 20 44Z" fill="#d8e4f4" opacity=".7"/><path d="M4 60 Q10 62 8 70" stroke="#fff" stroke-width="2" fill="none" opacity=".6"/><path d="M28 60 Q36 64 40 72 L30 72Z" fill="#9a8a7a" opacity=".6"/></g></svg></div>
 <div class="a" style="left:435px;top:118px;width:110px;height:110px;background:#fff;border:1px solid #d8d4cc;border-right:2px solid #111;border-bottom:2px solid #111"></div>
 <div class="a" style="left:442px;top:137px;width:96px;height:72px"><svg width="96" height="72" viewBox="0 0 96 72"><defs><filter id="tb3"><feGaussianBlur stdDeviation="1.3"/></filter><filter id="tb3b"><feGaussianBlur stdDeviation=".45"/></filter></defs><rect width="96" height="72" fill="#5a5230"/><g filter="url(#tb3)"><path d="M0 0 H40 L30 20 L10 30 L0 28Z" fill="#7a6c3c"/><path d="M4 30 L20 22 L30 36 L22 56 L6 64 L0 50Z" fill="#9a8a50"/><ellipse cx="72" cy="8" rx="22" ry="9" fill="#8a7a44"/><ellipse cx="90" cy="22" rx="8" ry="12" fill="#6a6a3a"/><ellipse cx="14" cy="66" rx="16" ry="8" fill="#6a5a30"/><ellipse cx="76" cy="62" rx="20" ry="12" fill="#2a4a20"/><ellipse cx="90" cy="48" rx="8" ry="10" fill="#3a5a28"/><ellipse cx="40" cy="14" rx="8" ry="8" fill="#4a4a28"/></g><g filter="url(#tb3b)"><circle cx="38" cy="3" r="4.2" fill="none" stroke="#9070c0" stroke-width="5.6" stroke-dasharray="1.13097 0.753982"/><circle cx="38" cy="3" r="5.25" fill="#9070c0" opacity=".55"/><circle cx="38" cy="3" r="2" fill="#7050a0"/><circle cx="47" cy="19" r="7.2" fill="none" stroke="#c890c8" stroke-width="9.6" stroke-dasharray="1.93881 1.29254"/><circle cx="47" cy="19" r="9" fill="#c890c8" opacity=".55"/><circle cx="47" cy="19" r="5" fill="#a82818"/><circle cx="31" cy="45" r="8.4" fill="none" stroke="#dcc0dc" stroke-width="11.2" stroke-dasharray="2.26194 1.50796"/><circle cx="31" cy="45" r="10.5" fill="#dcc0dc" opacity=".55"/><circle cx="31" cy="45" r="7.5" fill="#5a1a10"/><circle cx="83" cy="37" r="7.2" fill="none" stroke="#c070b8" stroke-width="9.6" stroke-dasharray="1.93881 1.29254"/><circle cx="83" cy="37" r="9" fill="#c070b8" opacity=".55"/><circle cx="83" cy="37" r="4.5" fill="#9a2020"/><circle cx="55" cy="59" r="5.4" fill="none" stroke="#e05890" stroke-width="7.2" stroke-dasharray="1.45411 0.969405"/><circle cx="55" cy="59" r="6.75" fill="#e05890" opacity=".55"/><circle cx="55" cy="59" r="3" fill="#b02018"/><path d="M64 72 L67 50 M72 72 L73 56" stroke="#3a7a28" stroke-width="2"/></g></svg></div>
 <div class="a" style="left:185px;top:243px;width:110px;height:110px;background:#fff;border:1px solid #d8d4cc;border-right:2px solid #111;border-bottom:2px solid #111"></div>
 <div class="a" style="left:192px;top:262px;width:96px;height:72px"><svg width="96" height="72" viewBox="0 0 96 72"><defs><filter id="tb4"><feGaussianBlur stdDeviation=".7"/></filter><filter id="tb4b"><feGaussianBlur stdDeviation="2.2"/></filter></defs><rect width="96" height="72" fill="#010401"/><g filter="url(#tb4b)"><ellipse cx="35" cy="66" rx="18" ry="7" fill="#4a7a48" opacity=".8"/><ellipse cx="88" cy="64" rx="10" ry="10" fill="#3a6a38" opacity=".8"/><ellipse cx="70" cy="22" rx="16" ry="8" fill="#0a1a0a"/></g><g filter="url(#tb4)"><path d="M31 46 Q36 28 52 22 Q66 18 80 28 Q72 36 56 42 Q42 48 31 46Z" fill="#5e9a4e"/><path d="M36 42 L48 26 M42 44 L56 25 M49 42 L63 24 M56 40 L70 25 M63 37 L75 28" stroke="#b8e4a4" stroke-width="1.6" opacity=".75"/><path d="M40 52 Q44 44 52 46 Q58 52 54 62 Q46 64 40 52Z" fill="#4e8a40"/><path d="M43 52 L52 48 M44 57 L54 53" stroke="#a0d090" stroke-width="1.2" opacity=".6"/><path d="M72 44 Q80 38 88 44 Q90 54 82 62 Q74 60 72 44Z" fill="#5e9a4e"/><path d="M75 50 L85 43 M76 55 L87 48" stroke="#a8d898" stroke-width="1.2" opacity=".6"/><path d="M64 55 Q68 50 72 54 Q72 62 66 63Z" fill="#3e7a34"/></g><circle cx="58" cy="27" r="1.6" fill="#b03818"/><circle cx="70" cy="47" r="1.7" fill="#c03818"/><circle cx="75" cy="43" r="1.6" fill="#c04020"/></svg></div>
 <div class="a" style="left:310px;top:243px;width:110px;height:110px;background:#fff;border:1px solid #d8d4cc;border-right:2px solid #111;border-bottom:2px solid #111"></div>
 <div class="a" style="left:317px;top:262px;width:96px;height:72px"><svg width="96" height="72" viewBox="0 0 96 72"><defs><filter id="tb5"><feGaussianBlur stdDeviation="1.2"/></filter></defs><rect width="96" height="72" fill="#8c857c"/><g filter="url(#tb5)"><rect x="0" y="0" width="96" height="12" fill="#6e6860"/><path d="M55 0 H96 V10 Q80 4 60 6Z" fill="#3a3a36"/><ellipse cx="22" cy="55" rx="34" ry="24" fill="#a09890"/><path d="M0 14 Q28 10 44 30 Q56 48 52 72 L44 72 Q48 46 34 32 Q18 20 0 24Z" fill="#5a524a"/><path d="M40 6 Q60 2 84 14 L88 22 Q70 12 48 12Z" fill="#5a564e"/><path d="M52 14 Q60 10 66 16 Q72 22 84 26 Q72 32 54 30 Q48 24 52 14Z" fill="#d8ccb0"/><path d="M60 36 Q66 52 62 72 L74 72 Q72 52 66 36Z" fill="#c0bab0"/><path d="M80 30 L88 26 L90 52 L82 56Z" fill="#4a4640"/><path d="M78 56 Q88 50 96 46 V72 H78Z" fill="#3a6070"/><path d="M88 14 H96 V40 L90 36Z" fill="#8a9a98"/></g></svg></div>
 <div class="a" style="left:435px;top:243px;width:110px;height:110px;background:#fff;border:1px solid #d8d4cc;border-right:2px solid #111;border-bottom:2px solid #111"></div>
 <div class="a" style="left:442px;top:262px;width:96px;height:72px"><svg width="96" height="72" viewBox="0 0 96 72"><defs><filter id="tb6"><feGaussianBlur stdDeviation="1.6"/></filter></defs><rect width="96" height="72" fill="#e24a0c"/><g filter="url(#tb6)"><ellipse cx="18" cy="10" rx="18" ry="10" fill="#ffb020"/><ellipse cx="58" cy="8" rx="14" ry="9" fill="#ffc838"/><ellipse cx="86" cy="22" rx="10" ry="12" fill="#f06818"/><ellipse cx="14" cy="36" rx="12" ry="8" fill="#ff8018" transform="rotate(-20 14 36)"/><ellipse cx="34" cy="30" rx="10" ry="6" fill="#ff9a18" transform="rotate(30 34 30)"/><ellipse cx="28" cy="52" rx="12" ry="6" fill="#ff7a10" transform="rotate(-30 28 52)"/><ellipse cx="50" cy="40" rx="8" ry="10" fill="#f86010"/><ellipse cx="72" cy="44" rx="14" ry="10" fill="#d43808"/><ellipse cx="64" cy="26" rx="9" ry="6" fill="#ff8a20" transform="rotate(40 64 26)"/><ellipse cx="8" cy="68" rx="18" ry="8" fill="#90983a"/><ellipse cx="48" cy="64" rx="10" ry="6" fill="#c03c08"/><ellipse cx="88" cy="62" rx="10" ry="10" fill="#e84810"/><ellipse cx="60" cy="58" rx="5" ry="4" fill="#70a038"/><ellipse cx="84" cy="8" rx="8" ry="6" fill="#f07020"/></g><circle cx="70" cy="7" r="2.2" fill="#603010" opacity=".6"/><circle cx="30" cy="40" r="2.2" fill="#603010" opacity=".6"/></svg></div>
 <div class="tx" style="left:6px;top:391px;color:#222">6 images (1.2 MB)</div>
 <div class="tx" style="left:221px;top:391px;color:#222">1600 x 1200 pixels - 302.4 KB - 27 April 2005, 21:41</div>
 <svg class="a" style="right:4px;bottom:4px" width="14" height="14" viewBox="0 0 14 14"><path d="M13 1 L1 13 M13 5 L5 13 M13 9 L9 13" stroke="#8a857c" stroke-width="1" stroke-dasharray="1 1"/></svg>
</div>

<!-- APPLICATIONS MENU -->
<div class="menu" style="left:0;top:24px;width:157px;height:217px">
 <div class="a" style="left:1px;top:1px;width:153px;height:29px;background:linear-gradient(#86a0b6,#647e94);border:1px solid #566c80;border-radius:2px"></div>
 <svg class="a" style="left:7px;top:4px" width="24" height="24" viewBox="0 0 24 24"><path d="M2 15 L10 10 L22 16 L13 21Z" fill="#bcdcf4" stroke="#111" stroke-width="1.2" stroke-linejoin="round"/><path d="M2 16.5 L13 22.5 L22 17" stroke="#fff" fill="none" stroke-width=".8"/><path d="M2 8 L10 2 L22 9 L13 15Z" fill="#e8ecea" stroke="#111" stroke-width="1.2" stroke-linejoin="round"/><path d="M6 7 L10 4 L14 6.5 L10 9Z" fill="#5ab05a"/><path d="M11 10 L13 11 M14 9 L16 10 M13 12 L15 13 M16 11 L18 12" stroke="#999" stroke-width="1"/></svg>
 <div class="tx" style="left:35px;top:9px;color:#fff">Accessories</div>
 <div class="arr" style="left:148px;top:12px;border-left-color:#fff"></div>
 <svg class="a" style="left:7px;top:33px" width="24" height="24" viewBox="0 0 24 24"><path d="M3 12 Q4 6 12 7 Q21 8 22 14 Q22 19 15 20 Q11 20 11 17 Q11 15 8 16 Q3 17 3 12Z" fill="#f0b818" stroke="#333" stroke-width="1"/><circle cx="16" cy="12" r="2.6" fill="#3050c8"/><circle cx="18" cy="16.5" r="1.8" fill="#d02020"/><circle cx="10" cy="11" r="2" fill="#40a040"/><path d="M5 1 L9 18" stroke="#333" stroke-width="2.4"/><path d="M5 1 L8 13" stroke="#c8c8c8" stroke-width="1"/><path d="M8.5 17 L9.5 22" stroke="#b03020" stroke-width="3"/></svg>
 <div class="tx" style="left:35px;top:38px">Graphics</div>
 <div class="arr" style="left:148px;top:41px"></div>
 <svg class="a" style="left:7px;top:62px" width="24" height="24" viewBox="0 0 24 24"><path d="M9 8 L18 5 L22 9 V18 L13 22 L9 18Z" fill="#e8e8e4" stroke="#222" stroke-width="1"/><path d="M13 11 L22 9 M13 11 V22" stroke="#555" stroke-width=".8"/><rect x="16" y="12" width="3" height="7" fill="#78c878" transform="skewY(-12)"/><path d="M7 2 Q3 4 5 8 Q8 10 5 13 Q2 16 5 19 Q8 21 10 19" stroke="#222" stroke-width="2.6" fill="none"/><path d="M7 2 Q3 4 5 8 Q8 10 5 13 Q2 16 5 19 Q8 21 10 19" stroke="#ddd" stroke-width="1.2" fill="none"/></svg>
 <div class="tx" style="left:35px;top:67px">Internet</div>
 <div class="arr" style="left:148px;top:70px"></div>
 <svg class="a" style="left:7px;top:91px" width="24" height="24" viewBox="0 0 24 24"><path d="M9 3 L19 1 L22 8 L12 10Z" fill="#f4f6f8" stroke="#222" stroke-width="1"/><path d="M11 4 L18 2.5 L20 7 L13 8.5Z" fill="#4a90e0"/><path d="M11 11 L22 9 L23 14 L12 16Z" fill="#f8f8f8" stroke="#333" stroke-width=".9"/><circle cx="8" cy="17" r="6" fill="#3a70c8" stroke="#222" stroke-width="1"/><path d="M8 17 L8 11 A6 6 0 0 1 14 17Z" fill="#e03030" stroke="#222" stroke-width=".6"/><path d="M8 17 L14 17 A6 6 0 0 1 12 21.5Z" fill="#f0f0f0" stroke="#222" stroke-width=".6"/></svg>
 <div class="tx" style="left:35px;top:96px">Office</div>
 <div class="arr" style="left:148px;top:99px"></div>
 <svg class="a" style="left:7px;top:120px" width="24" height="24" viewBox="0 0 24 24"><rect x="1" y="4" width="10" height="17" fill="#222"/><rect x="3" y="6" width="6" height="13" fill="#f4a010"/><rect x="3" y="6" width="3" height="13" fill="#ffd040"/><path d="M1.5 5 V20 M10.5 5 V20" stroke="#eee" stroke-width="1" stroke-dasharray="1.2 1.2"/><path d="M11 6 L17 3 L23 6 V20 L17 23 L11 20Z" fill="#e4e4e4" stroke="#333" stroke-width="1"/><path d="M17 3 V23" stroke="#bbb" stroke-width=".6"/><path d="M16 9 Q19 10 17 13 Q14 16 17 18 Q19 18 18 16" stroke="#777" stroke-width="1.1" fill="none"/></svg>
 <div class="tx" style="left:35px;top:125px">Sound &amp; Video</div>
 <div class="arr" style="left:148px;top:128px"></div>
 <svg class="a" style="left:7px;top:149px" width="24" height="24" viewBox="0 0 24 24"><path d="M3 3 L12 12" stroke="#222" stroke-width="2.6"/><path d="M3 3 L12 12" stroke="#ddd" stroke-width="1.2"/><path d="M11 11 L20 20" stroke="#222" stroke-width="5" stroke-linecap="round"/><path d="M11 11 L20 20" stroke="#e8b818" stroke-width="3.2" stroke-linecap="round"/><path d="M19 4 L5 18" stroke="#222" stroke-width="3.6"/><path d="M19 4 L5 18" stroke="#ccc" stroke-width="2"/><path d="M17 2 Q22 1 22 6 L19.5 6 L18 4.5Z" fill="#ccc" stroke="#222" stroke-width="1"/><path d="M2 16 Q1 22 7 21 L7 18.5 L5.5 17Z" fill="#ccc" stroke="#222" stroke-width="1"/></svg>
 <div class="tx" style="left:35px;top:154px">System Tools</div>
 <div class="arr" style="left:148px;top:157px"></div>
 <div class="a" style="left:6px;top:179px;width:143px;height:2px;border-top:1px solid #d3cec6;border-bottom:1px solid #fff"></div>
 <svg class="a" style="left:7px;top:188px" width="24" height="24" viewBox="0 0 24 24"><path d="M1 6 L19 2 L21 15 L3 19Z" fill="#d8d8d8" stroke="#222" stroke-width="1.1"/><path d="M3 7 L18 4 L18.5 8 L3.5 11Z" fill="#3a68b8"/><path d="M4 13 L14 11" stroke="#fff" stroke-width="1.6"/><circle cx="17" cy="18" r="5" fill="#f0c020" stroke="#6a5010" stroke-width="1" stroke-dasharray="2 1"/><circle cx="17" cy="18" r="2" fill="#fff" stroke="#6a5010" stroke-width=".6"/></svg>
 <div class="tx" style="left:35px;top:193px">Run Application...</div>
</div>
<!-- ACCESSORIES SUBMENU -->
<div class="menu" style="left:156px;top:24px;width:128px;height:119px">
 <svg class="a" style="left:6px;top:6px" width="26" height="20" viewBox="0 0 26 20"><path d="M1.5 8 L9 2 L24.5 11 L17 18Z" fill="#e2e4dc" stroke="#111" stroke-width="1.2" stroke-linejoin="round"/><path d="M1.5 8 L1.5 10 L17 20 L24.5 13 V11" fill="#b8bab0" stroke="#111" stroke-width="1"/><path d="M6 7 L10 4 L14 6.5 L10 9.5Z" fill="#78b878"/><path d="M12 10 L14 11 M15 8 L17 9 M14 12 L16 13 M17 10 L19 11 M16 14 L18 15 M19 12 L21 13" stroke="#888" stroke-width="1.2"/></svg>
 <div class="tx" style="left:34px;top:9px">Calculator</div>
 <svg class="a" style="left:6px;top:33px" width="26" height="24" viewBox="0 0 26 24"><circle cx="9" cy="4" r="2.8" fill="#4ab040" stroke="#1a5a10" stroke-width=".8"/><path d="M9 6 V10" stroke="#333"/><path d="M2 14 L8 10 L14 13 L8 17Z" fill="#f0f0f0" stroke="#222" stroke-width="1"/><path d="M2 14 V16 L8 19 V17" fill="#aaa" stroke="#222" stroke-width=".8"/><path d="M10 11 L16 7 L22 10 L16 14Z" fill="#f0f0f0" stroke="#222" stroke-width="1"/><path d="M7 19 L13 15 L19 18 L13 22Z" fill="#f0f0f0" stroke="#222" stroke-width="1"/><path d="M15 16 L21 12 L25 14.5 L19 18.5Z" fill="#f0f0f0" stroke="#222" stroke-width="1"/><path d="M7 19 V20.5 L13 23.5 V22 M19 18.5 V20 L25 16 V14.5" fill="none" stroke="#222" stroke-width=".8"/></svg>
 <div class="tx" style="left:34px;top:38px">Character Map</div>
 <svg class="a" style="left:6px;top:62px" width="24" height="24" viewBox="0 0 24 24"><path d="M10 3 L17 1 L20 4 L20 16 L13 18 L10 15Z" fill="#3a8a48" stroke="#111" stroke-width="1"/><path d="M17 1 V13 L20 16" stroke="#1a4a20" fill="none" stroke-width=".8"/><path d="M13 6 L16 5" stroke="#9ad8a0" stroke-width="1"/><path d="M1 15 L12 10 L19 15 L8 21Z" fill="#5a98d0" stroke="#111" stroke-width="1"/><path d="M1 15 V17 L8 23 L19 17 V15" fill="#3a6898" stroke="#111" stroke-width="1"/><path d="M3 16 L8 20 L17 15.5" stroke="#fff" stroke-width=".8" fill="none"/></svg>
 <div class="tx" style="left:34px;top:67px">Dictionary</div>
 <svg class="a" style="left:7px;top:91px" width="24" height="24" viewBox="0 0 24 24"><rect x="1.5" y="3" width="17" height="19.5" rx="1" fill="#fff" stroke="#111" stroke-width="1.4"/><path d="M3 3 H17" stroke="#111" stroke-width="2.6" stroke-dasharray="1.2 1"/><path d="M4 8 H12 M4 11 H10 M4 14 H9" stroke="#bbb" stroke-width="1"/><path d="M8 19 L20 5" stroke="#111" stroke-width="4"/><path d="M8 19 L20 5" stroke="#e8d090" stroke-width="2.2"/><path d="M7 21 L8 18.5 L9.5 19.8Z" fill="#111"/></svg>
 <div class="tx" style="left:34px;top:96px">Text Editor</div>
</div>

</body></html>
